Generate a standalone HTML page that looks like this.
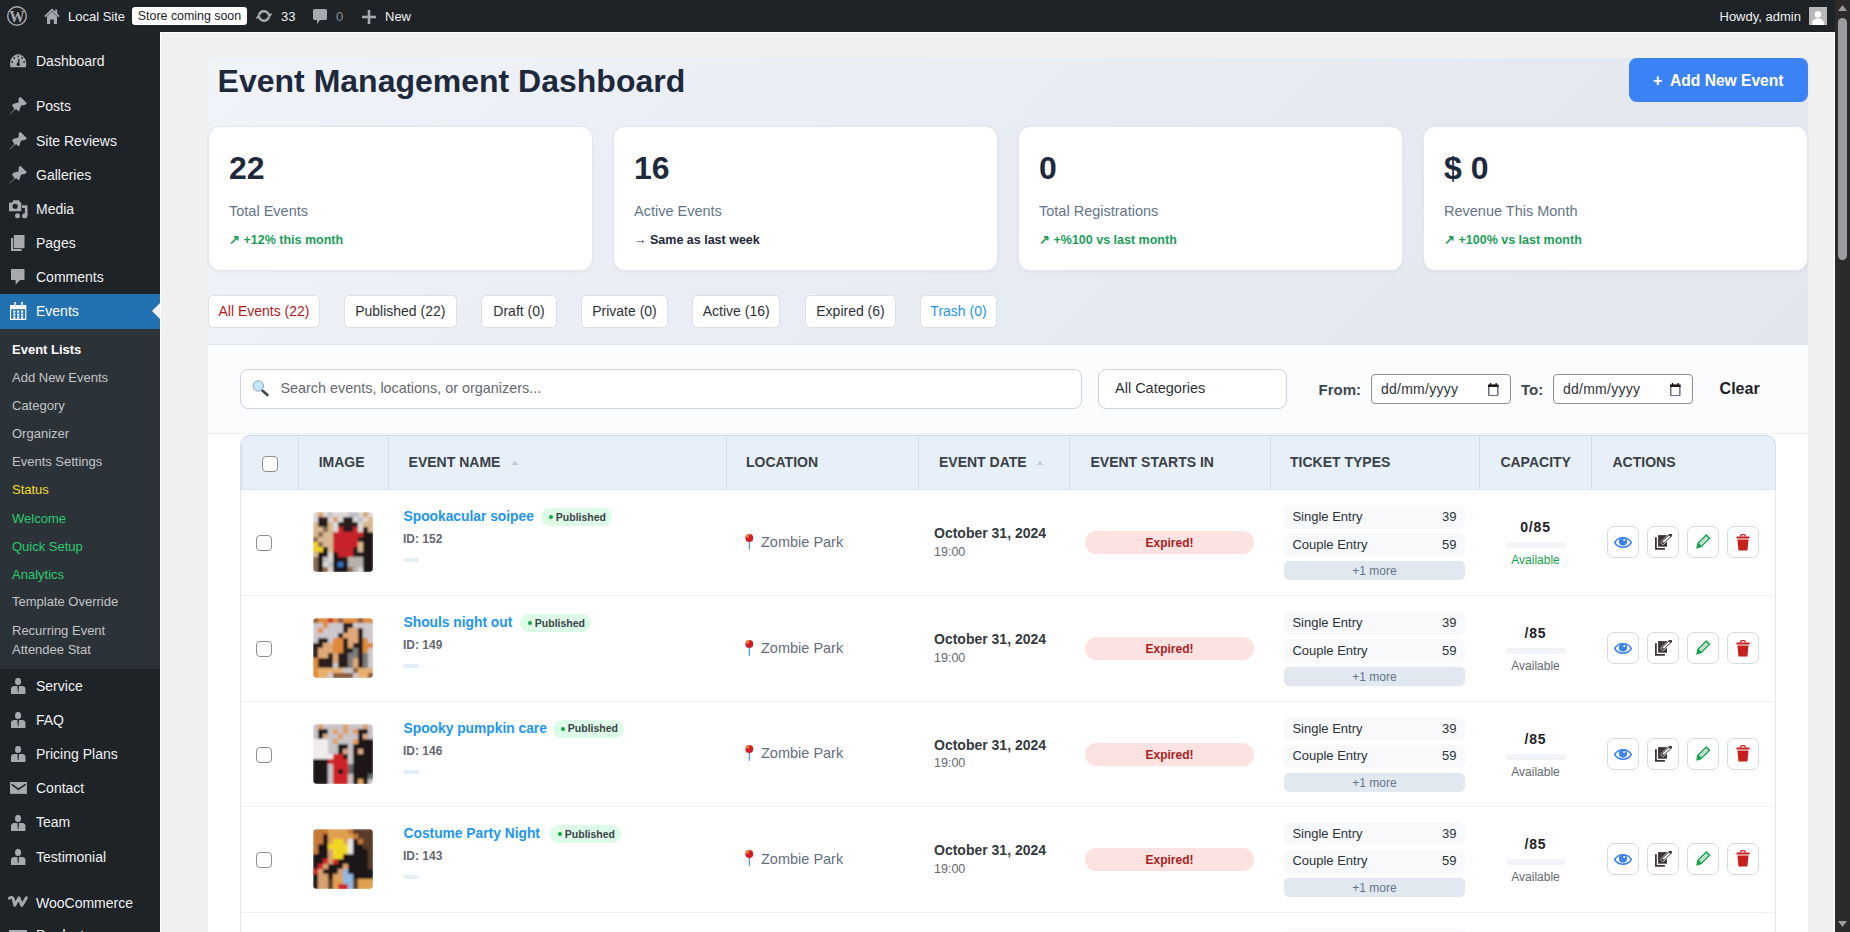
<!DOCTYPE html><html><head><meta charset="utf-8"><style>
*{box-sizing:border-box;margin:0;padding:0}
html,body{width:1850px;height:932px;overflow:hidden}
body{font-family:"Liberation Sans",sans-serif;background:#f0f0f1;position:relative}
.t{position:absolute;line-height:1;white-space:nowrap}
.r{position:absolute}
</style></head><body>
<div class="r" style="left:0.0px;top:0.0px;width:1835.0px;height:32.0px;background:#1d2327"></div>
<svg class="r" style="left:7.0px;top:6.0px" width="20" height="20" viewBox="0 0 20 20"><circle cx="10" cy="10" r="9.3" fill="none" stroke="#a7aaad" stroke-width="1.4"/><text x="10" y="15.6" text-anchor="middle" font-family="Liberation Serif" font-weight="700" font-size="17" fill="#a7aaad" textLength="15.5" lengthAdjust="spacingAndGlyphs">W</text></svg>
<svg class="r" style="left:44.0px;top:8.0px" width="16" height="17" viewBox="0 0 16 17"><path d="M1 8.6L8 1.8 15 8.6" fill="none" stroke="#a7aaad" stroke-width="2"/><path d="M3 8.6L8 3.8 13 8.6V16H9.8V11.5H6.2V16H3z" fill="#a7aaad"/><rect x="11.2" y="1.5" width="2" height="4.5" fill="#a7aaad"/></svg>
<div class="t" style="left:68.0px;top:9.50px;font-size:13.0px;font-weight:400;color:#f0f0f1;">Local Site</div>
<div class="r" style="left:132.0px;top:7.0px;width:115.0px;height:18.0px;background:#fff;border-radius:3px"></div>
<div class="t" style="left:132.0px;top:9.80px;width:115px;text-align:center;font-size:12.4px;font-weight:400;color:#1d2327;">Store coming soon</div>
<svg class="r" style="left:255.0px;top:9.0px" width="18" height="14" viewBox="0 0 18 14"><path d="M4 6.2A5.2 5.2 0 0 1 13.4 4.6M14 7.8A5.2 5.2 0 0 1 4.6 9.4" fill="none" stroke="#a7aaad" stroke-width="2.5"/><path d="M11.4 4.6H17.6L14.5 8.4zM6.6 9.4H0.4L3.5 5.6z" fill="#a7aaad"/></svg>
<div class="t" style="left:281.0px;top:9.50px;font-size:13.0px;font-weight:400;color:#f0f0f1;">33</div>
<svg class="r" style="left:313.0px;top:9.0px" width="14" height="16" viewBox="0 0 14 16"><path d="M1.5 0h11a1.5 1.5 0 0 1 1.5 1.5v8a1.5 1.5 0 0 1-1.5 1.5H7L4 15v-4H1.5A1.5 1.5 0 0 1 0 9.5v-8A1.5 1.5 0 0 1 1.5 0z" fill="#a7aaad"/></svg>
<div class="t" style="left:336.0px;top:9.50px;font-size:13.0px;font-weight:400;color:#8c8f94;">0</div>
<svg class="r" style="left:361.5px;top:9.5px" width="14" height="14" viewBox="0 0 14 14"><rect x="5.7" y="0" width="2.6" height="14" fill="#a7aaad"/><rect x="0" y="5.7" width="14" height="2.6" fill="#a7aaad"/></svg>
<div class="t" style="left:385.0px;top:9.50px;font-size:13.0px;font-weight:400;color:#f0f0f1;">New</div>
<div class="t" style="left:1719.5px;top:9.80px;font-size:13.0px;font-weight:400;color:#f0f0f1;">Howdy, admin</div>
<svg class="r" style="left:1809.0px;top:7.0px" width="18" height="18" viewBox="0 0 18 18"><rect width="18" height="18" fill="#b9b9bb"/><circle cx="9" cy="7.5" r="3.3" fill="#fff"/><path d="M3 18 C3 12.5 5.5 11.5 9 11.5 C12.5 11.5 15 12.5 15 18 Z" fill="#fff"/></svg>
<div class="r" style="left:1835.0px;top:0.0px;width:15.0px;height:932.0px;background:#2c2b2a"></div>
<svg class="r" style="left:1838.0px;top:5.0px" width="9" height="6" viewBox="0 0 9 6"><path d="M4.5 0 L9 6 L0 6 Z" fill="#9a9d9f"/></svg>
<div class="r" style="left:1838.0px;top:18.0px;width:9.0px;height:242.0px;background:#9a9d9f;border-radius:5px"></div>
<svg class="r" style="left:1838.0px;top:921.0px" width="9" height="6" viewBox="0 0 9 6"><path d="M0 0 L9 0 L4.5 6 Z" fill="#9a9d9f"/></svg>
<div class="r" style="left:160.0px;top:32.0px;width:1675.0px;height:1.0px;background:#fff"></div>
<div class="r" style="left:160.0px;top:32.0px;width:1.0px;height:900.0px;background:#fff"></div>
<div class="r" style="left:1834.0px;top:32.0px;width:1.0px;height:900.0px;background:#fff"></div>
<div class="r" style="left:0.0px;top:32.0px;width:160.0px;height:900.0px;background:#1d2327"></div>
<svg class="r" style="left:9.8px;top:53.8px" width="17" height="14" viewBox="0 0 17 14"><path d="M0.5 13.3C-0.3 10 0 7 1.5 4.5 3 2 5.5 0.2 8.15 0.2S13.3 2 14.8 4.5C16.3 7 16.6 10 15.8 13.3z" fill="#a7aaad"/><g fill="#1d2327"><circle cx="8.1" cy="2.3" r="0.9"/><circle cx="4.2" cy="4" r="0.9"/><circle cx="12.1" cy="4" r="0.9"/><circle cx="2.2" cy="8" r="0.9"/><circle cx="14.1" cy="8" r="0.9"/><path d="M8.4 4.8L9.5 5 9.3 10.5 7.3 10.5z"/><circle cx="8.2" cy="10.4" r="1.7"/></g></svg>
<div class="t" style="left:36.0px;top:54.35px;font-size:14.0px;font-weight:400;color:#f0f0f1;">Dashboard</div>
<svg class="r" style="left:8.9px;top:97.2px" width="18" height="18" viewBox="0 0 18 18"><path d="M0.2 17.5L5.5 12.3 3 8.2 4.6 6.8 9.5 5.5 9.75 0.9 11.55 0 17.9 6.3 15.9 8.1 12.3 8.4 11 11.2 10.5 13.5 9.5 14.3 7.4 12.2 5.6 13 0.7 17.6z" fill="#a7aaad"/></svg>
<div class="t" style="left:36.0px;top:99.15px;font-size:14.0px;font-weight:400;color:#f0f0f1;">Posts</div>
<svg class="r" style="left:8.9px;top:131.6px" width="18" height="18" viewBox="0 0 18 18"><path d="M0.2 17.5L5.5 12.3 3 8.2 4.6 6.8 9.5 5.5 9.75 0.9 11.55 0 17.9 6.3 15.9 8.1 12.3 8.4 11 11.2 10.5 13.5 9.5 14.3 7.4 12.2 5.6 13 0.7 17.6z" fill="#a7aaad"/></svg>
<div class="t" style="left:36.0px;top:133.55px;font-size:14.0px;font-weight:400;color:#f0f0f1;">Site Reviews</div>
<svg class="r" style="left:8.9px;top:166.1px" width="18" height="18" viewBox="0 0 18 18"><path d="M0.2 17.5L5.5 12.3 3 8.2 4.6 6.8 9.5 5.5 9.75 0.9 11.55 0 17.9 6.3 15.9 8.1 12.3 8.4 11 11.2 10.5 13.5 9.5 14.3 7.4 12.2 5.6 13 0.7 17.6z" fill="#a7aaad"/></svg>
<div class="t" style="left:36.0px;top:168.05px;font-size:14.0px;font-weight:400;color:#f0f0f1;">Galleries</div>
<svg class="r" style="left:8.9px;top:200.0px" width="19" height="18.5" viewBox="0 0 19 18"><path d="M0 2.2h3.4l1-2.2h5.7l1 2.2h1.2v8.7H0z" fill="#a7aaad"/><circle cx="6.1" cy="6" r="2.6" fill="#1d2327"/><path d="M13.1 5h5.4v10.5h-2.6V7.8h-2.8z" fill="#a7aaad"/><circle cx="8.5" cy="15.5" r="2.5" fill="#a7aaad"/><circle cx="15.7" cy="15.5" r="2.6" fill="#a7aaad"/></svg>
<div class="t" style="left:36.0px;top:202.15px;font-size:14.0px;font-weight:400;color:#f0f0f1;">Media</div>
<svg class="r" style="left:10.8px;top:234.8px" width="14" height="17" viewBox="0 0 14 17"><rect x="2.9" y="0" width="10.6" height="13.2" fill="#a7aaad"/><path d="M0 2.9h2.2v11h8.4v2.2H0z" fill="#a7aaad"/></svg>
<div class="t" style="left:36.0px;top:236.15px;font-size:14.0px;font-weight:400;color:#f0f0f1;">Pages</div>
<svg class="r" style="left:10.8px;top:269.0px" width="14" height="16" viewBox="0 0 14 16"><path d="M0 0h13.5v10.9H9.2L4.6 15.7V10.9H0z" fill="#a7aaad"/></svg>
<div class="t" style="left:36.0px;top:270.15px;font-size:14.0px;font-weight:400;color:#f0f0f1;">Comments</div>
<div class="r" style="left:0.0px;top:294.0px;width:160.0px;height:34.5px;background:#2271b1"></div>
<svg class="r" style="left:9.9px;top:302.0px" width="17" height="18" viewBox="0 0 17 18"><rect x="0" y="3" width="16.3" height="15" fill="#fff"/><rect x="1.2" y="7.2" width="13.9" height="9.6" fill="#2271b1"/><rect x="4.2" y="0" width="1.9" height="5" fill="#fff"/><rect x="11.1" y="0" width="1.9" height="5" fill="#fff"/><rect x="4.8" y="0.8" width="0.7" height="3.6" fill="#5b93c9"/><rect x="11.7" y="0.8" width="0.7" height="3.6" fill="#5b93c9"/><rect x="3.2" y="8.5" width="2.2" height="2.2" fill="#fff"/><rect x="3.2" y="11.5" width="2.2" height="2.2" fill="#fff"/><rect x="3.2" y="14.5" width="2.2" height="2.2" fill="#fff"/><rect x="7.1" y="8.5" width="2.2" height="2.2" fill="#fff"/><rect x="7.1" y="11.5" width="2.2" height="2.2" fill="#fff"/><rect x="7.1" y="14.5" width="2.2" height="2.2" fill="#fff"/><rect x="11.0" y="8.5" width="2.2" height="2.2" fill="#fff"/><rect x="11.0" y="11.5" width="2.2" height="2.2" fill="#fff"/><rect x="11.0" y="14.5" width="2.2" height="2.2" fill="#fff"/></svg>
<div class="t" style="left:36.0px;top:304.15px;font-size:14.0px;font-weight:400;color:#fff;">Events</div>
<svg class="r" style="left:152.0px;top:303.0px" width="8" height="16" viewBox="0 0 8 16"><path d="M8 0 L0 8 L8 16 Z" fill="#f0f0f1"/></svg>
<div class="r" style="left:0.0px;top:328.5px;width:160.0px;height:340.5px;background:#2c3338"></div>
<div class="t" style="left:12.0px;top:343.00px;font-size:13.0px;font-weight:700;color:#fff;">Event Lists</div>
<div class="t" style="left:12.0px;top:371.00px;font-size:13.0px;font-weight:400;color:#c3c4c7;">Add New Events</div>
<div class="t" style="left:12.0px;top:399.00px;font-size:13.0px;font-weight:400;color:#c3c4c7;">Category</div>
<div class="t" style="left:12.0px;top:427.00px;font-size:13.0px;font-weight:400;color:#c3c4c7;">Organizer</div>
<div class="t" style="left:12.0px;top:455.00px;font-size:13.0px;font-weight:400;color:#c3c4c7;">Events Settings</div>
<div class="t" style="left:12.0px;top:483.00px;font-size:13.0px;font-weight:400;color:#f5dc2a;">Status</div>
<div class="t" style="left:12.0px;top:511.50px;font-size:13.0px;font-weight:400;color:#2ecc71;">Welcome</div>
<div class="t" style="left:12.0px;top:539.50px;font-size:13.0px;font-weight:400;color:#2ecc71;">Quick Setup</div>
<div class="t" style="left:12.0px;top:567.50px;font-size:13.0px;font-weight:400;color:#2ecc71;">Analytics</div>
<div class="t" style="left:12.0px;top:595.20px;font-size:13.0px;font-weight:400;color:#c3c4c7;">Template Override</div>
<div class="t" style="left:12.0px;top:624.00px;font-size:13.0px;font-weight:400;color:#c3c4c7;">Recurring Event</div>
<div class="t" style="left:12.0px;top:643.00px;font-size:13.0px;font-weight:400;color:#c3c4c7;">Attendee Stat</div>
<svg class="r" style="left:10.9px;top:677.9px" width="15" height="16" viewBox="0 0 15 16"><ellipse cx="7.05" cy="3.4" rx="3.05" ry="3.5" fill="#a7aaad"/><path d="M0 15.9V10.8Q0 7.9 3.5 7.9H10.9Q14.4 7.9 14.4 10.8V15.9z" fill="#a7aaad"/><path d="M6.3 7.9H7.9L7.6 13.8 6.9 14.4z" fill="#1d2327"/></svg>
<div class="t" style="left:36.0px;top:679.15px;font-size:14.0px;font-weight:400;color:#f0f0f1;">Service</div>
<svg class="r" style="left:10.9px;top:711.9px" width="15" height="16" viewBox="0 0 15 16"><ellipse cx="7.05" cy="3.4" rx="3.05" ry="3.5" fill="#a7aaad"/><path d="M0 15.9V10.8Q0 7.9 3.5 7.9H10.9Q14.4 7.9 14.4 10.8V15.9z" fill="#a7aaad"/><path d="M6.3 7.9H7.9L7.6 13.8 6.9 14.4z" fill="#1d2327"/></svg>
<div class="t" style="left:36.0px;top:713.15px;font-size:14.0px;font-weight:400;color:#f0f0f1;">FAQ</div>
<svg class="r" style="left:10.9px;top:745.9px" width="15" height="16" viewBox="0 0 15 16"><ellipse cx="7.05" cy="3.4" rx="3.05" ry="3.5" fill="#a7aaad"/><path d="M0 15.9V10.8Q0 7.9 3.5 7.9H10.9Q14.4 7.9 14.4 10.8V15.9z" fill="#a7aaad"/><path d="M6.3 7.9H7.9L7.6 13.8 6.9 14.4z" fill="#1d2327"/></svg>
<div class="t" style="left:36.0px;top:747.15px;font-size:14.0px;font-weight:400;color:#f0f0f1;">Pricing Plans</div>
<svg class="r" style="left:10.0px;top:781.9px" width="17" height="12" viewBox="0 0 17 12"><rect width="16.9" height="11.9" fill="#a7aaad"/><path d="M1.7 2.3L8.4 7.2 15.6 2.3" fill="none" stroke="#1d2327" stroke-width="1.6"/></svg>
<div class="t" style="left:36.0px;top:781.15px;font-size:14.0px;font-weight:400;color:#f0f0f1;">Contact</div>
<svg class="r" style="left:10.9px;top:814.9px" width="15" height="16" viewBox="0 0 15 16"><ellipse cx="7.05" cy="3.4" rx="3.05" ry="3.5" fill="#a7aaad"/><path d="M0 15.9V10.8Q0 7.9 3.5 7.9H10.9Q14.4 7.9 14.4 10.8V15.9z" fill="#a7aaad"/><path d="M6.3 7.9H7.9L7.6 13.8 6.9 14.4z" fill="#1d2327"/></svg>
<div class="t" style="left:36.0px;top:815.15px;font-size:14.0px;font-weight:400;color:#f0f0f1;">Team</div>
<svg class="r" style="left:10.9px;top:848.9px" width="15" height="16" viewBox="0 0 15 16"><ellipse cx="7.05" cy="3.4" rx="3.05" ry="3.5" fill="#a7aaad"/><path d="M0 15.9V10.8Q0 7.9 3.5 7.9H10.9Q14.4 7.9 14.4 10.8V15.9z" fill="#a7aaad"/><path d="M6.3 7.9H7.9L7.6 13.8 6.9 14.4z" fill="#1d2327"/></svg>
<div class="t" style="left:36.0px;top:850.15px;font-size:14.0px;font-weight:400;color:#f0f0f1;">Testimonial</div>
<svg class="r" style="left:8.0px;top:895.9px" width="20" height="12" viewBox="0 0 20 12"><path d="M1.4 2.2Q3.5 0.4 5.2 2.6L6.8 9.4 11 1.8 13.8 9.4 18.4 1.8" fill="none" stroke="#a7aaad" stroke-width="2.9" stroke-linejoin="round" stroke-linecap="round"/></svg>
<div class="t" style="left:36.0px;top:895.65px;font-size:14.0px;font-weight:400;color:#f0f0f1;">WooCommerce</div>
<div class="r" style="left:9.0px;top:930.0px;width:18.0px;height:5.0px;background:#a7aaad"></div>
<div class="t" style="left:36.0px;top:928.35px;font-size:14.0px;font-weight:400;color:#f0f0f1;">Products</div>
<div class="r" style="left:208.0px;top:58.0px;width:1600.0px;height:286.0px;background:linear-gradient(135deg,#f0f3f8 0%,#e6ebf2 60%,#e2e7ef 100%)"></div>
<div class="t" style="left:217.6px;top:64.81px;font-size:32.0px;font-weight:700;color:#1e293b;">Event Management Dashboard</div>
<div class="r" style="left:1629.0px;top:58.0px;width:179.0px;height:44.0px;background:#3b82f6;border-radius:8px"></div>
<div class="t" style="left:1653.0px;top:72.86px;font-size:16.0px;font-weight:700;color:#fff;">+</div>
<div class="t" style="left:1670.0px;top:73.19px;font-size:15.6px;font-weight:700;color:#fff;">Add New Event</div>
<div class="r" style="left:208.0px;top:126.0px;width:385.0px;height:144.5px;background:#fff;border:1px solid #e3e8ef;border-radius:12px;box-shadow:0 1px 3px rgba(15,23,42,0.06)"></div>
<div class="t" style="left:229.0px;top:151.91px;font-size:32.0px;font-weight:700;color:#1e293b;">22</div>
<div class="t" style="left:229.0px;top:204.03px;font-size:14.5px;font-weight:400;color:#64748b;">Total Events</div>
<div class="t" style="left:229.0px;top:234.42px;font-size:12.5px;font-weight:700;color:#1c9e57;">&#8599; +12% this month</div>
<div class="r" style="left:613.0px;top:126.0px;width:385.0px;height:144.5px;background:#fff;border:1px solid #e3e8ef;border-radius:12px;box-shadow:0 1px 3px rgba(15,23,42,0.06)"></div>
<div class="t" style="left:634.0px;top:151.91px;font-size:32.0px;font-weight:700;color:#1e293b;">16</div>
<div class="t" style="left:634.0px;top:204.03px;font-size:14.5px;font-weight:400;color:#64748b;">Active Events</div>
<div class="t" style="left:634.0px;top:234.42px;font-size:12.5px;font-weight:700;color:#1e293b;">&#8594; Same as last week</div>
<div class="r" style="left:1018.0px;top:126.0px;width:385.0px;height:144.5px;background:#fff;border:1px solid #e3e8ef;border-radius:12px;box-shadow:0 1px 3px rgba(15,23,42,0.06)"></div>
<div class="t" style="left:1039.0px;top:151.91px;font-size:32.0px;font-weight:700;color:#1e293b;">0</div>
<div class="t" style="left:1039.0px;top:204.03px;font-size:14.5px;font-weight:400;color:#64748b;">Total Registrations</div>
<div class="t" style="left:1039.0px;top:234.42px;font-size:12.5px;font-weight:700;color:#1c9e57;">&#8599; +%100 vs last month</div>
<div class="r" style="left:1423.0px;top:126.0px;width:385.0px;height:144.5px;background:#fff;border:1px solid #e3e8ef;border-radius:12px;box-shadow:0 1px 3px rgba(15,23,42,0.06)"></div>
<div class="t" style="left:1444.0px;top:151.91px;font-size:32.0px;font-weight:700;color:#1e293b;">$ 0</div>
<div class="t" style="left:1444.0px;top:204.03px;font-size:14.5px;font-weight:400;color:#64748b;">Revenue This Month</div>
<div class="t" style="left:1444.0px;top:234.42px;font-size:12.5px;font-weight:700;color:#1c9e57;">&#8599; +100% vs last month</div>
<div class="r" style="left:208.0px;top:295.0px;width:112.0px;height:33.0px;background:#fff;border:1px solid #dcdfe4;border-radius:5px"></div>
<div class="t" style="left:198.0px;top:303.85px;width:132px;text-align:center;font-size:14.0px;font-weight:400;color:#b01c1c;">All Events (22)</div>
<div class="r" style="left:344.0px;top:295.0px;width:113.0px;height:33.0px;background:#fff;border:1px solid #dcdfe4;border-radius:5px"></div>
<div class="t" style="left:334.3px;top:303.85px;width:132px;text-align:center;font-size:14.0px;font-weight:400;color:#2c3338;">Published (22)</div>
<div class="r" style="left:481.0px;top:295.0px;width:76.0px;height:33.0px;background:#fff;border:1px solid #dcdfe4;border-radius:5px"></div>
<div class="t" style="left:471.0px;top:303.85px;width:96px;text-align:center;font-size:14.0px;font-weight:400;color:#2c3338;">Draft (0)</div>
<div class="r" style="left:581.0px;top:295.0px;width:87.0px;height:33.0px;background:#fff;border:1px solid #dcdfe4;border-radius:5px"></div>
<div class="t" style="left:571.0px;top:303.85px;width:107px;text-align:center;font-size:14.0px;font-weight:400;color:#2c3338;">Private (0)</div>
<div class="r" style="left:692.0px;top:295.0px;width:88.0px;height:33.0px;background:#fff;border:1px solid #dcdfe4;border-radius:5px"></div>
<div class="t" style="left:682.2px;top:303.85px;width:108px;text-align:center;font-size:14.0px;font-weight:400;color:#2c3338;">Active (16)</div>
<div class="r" style="left:805.0px;top:295.0px;width:91.0px;height:33.0px;background:#fff;border:1px solid #dcdfe4;border-radius:5px"></div>
<div class="t" style="left:795.0px;top:303.85px;width:111px;text-align:center;font-size:14.0px;font-weight:400;color:#2c3338;">Expired (6)</div>
<div class="r" style="left:920.0px;top:295.0px;width:77.0px;height:33.0px;background:#fff;border:1px solid #dcdfe4;border-radius:5px"></div>
<div class="t" style="left:910.0px;top:303.85px;width:97px;text-align:center;font-size:14.0px;font-weight:400;color:#2196f3;">Trash (0)</div>
<div class="r" style="left:208.0px;top:344.0px;width:1600.0px;height:588.0px;background:#fff"></div>
<div class="r" style="left:208.0px;top:344.0px;width:1600.0px;height:90.0px;background:#fbfcfd;border-bottom:1px solid #edf1f5"></div>
<div class="r" style="left:208.0px;top:344.0px;width:1600.0px;height:1.0px;background:#e1e7ef"></div>
<div class="r" style="left:240.0px;top:369.0px;width:842.0px;height:40.0px;background:#fff;border:1px solid #ccd3dc;border-radius:8px"></div>
<svg class="r" style="left:252.0px;top:379.5px" width="17" height="17" viewBox="0 0 17 17"><circle cx="6.3" cy="6" r="5.2" fill="#c2e9fb" stroke="#8c99a6" stroke-width="0.9"/><path d="M10.6 10.8L15.4 15" stroke="#34493d" stroke-width="2.6" stroke-linecap="round"/></svg>
<div class="t" style="left:280.4px;top:381.31px;font-size:14.4px;font-weight:400;color:#646970;">Search events, locations, or organizers...</div>
<div class="r" style="left:1098.0px;top:369.0px;width:189.0px;height:40.0px;background:#fff;border:1px solid #ccd3dc;border-radius:8px"></div>
<div class="t" style="left:1115.0px;top:381.23px;font-size:14.5px;font-weight:400;color:#2c3338;">All Categories</div>
<div class="t" style="left:1318.6px;top:382.10px;font-size:15.0px;font-weight:700;color:#3d4950;">From:</div>
<div class="t" style="left:1521.0px;top:382.10px;font-size:15.0px;font-weight:700;color:#3d4950;">To:</div>
<div class="r" style="left:1371.0px;top:374.0px;width:140.0px;height:30.0px;background:#fff;border:1px solid #8c8f94;border-radius:4px"></div>
<div class="t" style="left:1381.0px;top:382.15px;font-size:14.0px;font-weight:400;color:#2c3338;letter-spacing:0.25px">dd/mm/yyyy</div>
<svg class="r" style="left:1488.3px;top:383.0px" width="11" height="13" viewBox="0 0 11 13"><rect x="0.75" y="2.3" width="9.1" height="10.4" rx="1" fill="none" stroke="#6b6e82" stroke-width="1.5"/><rect x="0" y="1.6" width="10.6" height="2.3" fill="#140c0c"/><rect x="1.8" y="0" width="1.3" height="2.5" fill="#140c0c"/><rect x="7.5" y="0" width="1.3" height="2.5" fill="#140c0c"/></svg>
<div class="r" style="left:1553.0px;top:374.0px;width:140.0px;height:30.0px;background:#fff;border:1px solid #8c8f94;border-radius:4px"></div>
<div class="t" style="left:1563.0px;top:382.15px;font-size:14.0px;font-weight:400;color:#2c3338;letter-spacing:0.25px">dd/mm/yyyy</div>
<svg class="r" style="left:1670.3px;top:383.0px" width="11" height="13" viewBox="0 0 11 13"><rect x="0.75" y="2.3" width="9.1" height="10.4" rx="1" fill="none" stroke="#6b6e82" stroke-width="1.5"/><rect x="0" y="1.6" width="10.6" height="2.3" fill="#140c0c"/><rect x="1.8" y="0" width="1.3" height="2.5" fill="#140c0c"/><rect x="7.5" y="0" width="1.3" height="2.5" fill="#140c0c"/></svg>
<div class="t" style="left:1719.6px;top:381.46px;font-size:16.0px;font-weight:700;color:#1d2327;">Clear</div>
<div class="r" style="left:240.0px;top:434.5px;width:1536.0px;height:517.5px;background:#fff;border:1px solid #e1e7ee;border-radius:10px 10px 0 0"></div>
<div class="r" style="left:240.0px;top:434.5px;width:1536.0px;height:55.0px;background:#e7f0f8;border:1px solid #d5dde6;border-left-color:#e0e5ee;border-bottom:1px solid #dbe4ec;border-radius:10px 10px 0 0"></div>
<div class="r" style="left:241.0px;top:443.5px;width:1.0px;height:45.0px;background:#d6d9de"></div>
<div class="r" style="left:298.0px;top:435.5px;width:1.0px;height:54.0px;background:#d3dde7"></div>
<div class="r" style="left:388.0px;top:435.5px;width:1.0px;height:54.0px;background:#d3dde7"></div>
<div class="r" style="left:725.5px;top:435.5px;width:1.0px;height:54.0px;background:#d3dde7"></div>
<div class="r" style="left:918.0px;top:435.5px;width:1.0px;height:54.0px;background:#d3dde7"></div>
<div class="r" style="left:1069.0px;top:435.5px;width:1.0px;height:54.0px;background:#d3dde7"></div>
<div class="r" style="left:1269.6px;top:435.5px;width:1.0px;height:54.0px;background:#d3dde7"></div>
<div class="r" style="left:1479.0px;top:435.5px;width:1.0px;height:54.0px;background:#d3dde7"></div>
<div class="r" style="left:1591.0px;top:435.5px;width:1.0px;height:54.0px;background:#d3dde7"></div>
<div class="t" style="left:318.7px;top:455.45px;font-size:14.0px;font-weight:700;color:#3a4046;">IMAGE</div>
<div class="t" style="left:408.6px;top:455.45px;font-size:14.0px;font-weight:700;color:#3a4046;">EVENT NAME</div>
<div class="t" style="left:746.0px;top:455.45px;font-size:14.0px;font-weight:700;color:#3a4046;">LOCATION</div>
<div class="t" style="left:939.0px;top:455.45px;font-size:14.0px;font-weight:700;color:#3a4046;">EVENT DATE</div>
<div class="t" style="left:1090.5px;top:455.45px;font-size:14.0px;font-weight:700;color:#3a4046;">EVENT STARTS IN</div>
<div class="t" style="left:1290.0px;top:455.45px;font-size:14.0px;font-weight:700;color:#3a4046;">TICKET TYPES</div>
<div class="t" style="left:1500.4px;top:455.45px;font-size:14.0px;font-weight:700;color:#3a4046;">CAPACITY</div>
<div class="t" style="left:1612.5px;top:455.45px;font-size:14.0px;font-weight:700;color:#3a4046;">ACTIONS</div>
<svg class="r" style="left:511.0px;top:460.0px" width="8" height="6" viewBox="0 0 8 6"><path d="M4 1 L7.5 5 L0.5 5 Z" fill="#c4c9cf"/></svg>
<svg class="r" style="left:1036.0px;top:460.0px" width="8" height="6" viewBox="0 0 8 6"><path d="M4 1 L7.5 5 L0.5 5 Z" fill="#c4c9cf"/></svg>
<div class="r" style="left:262.0px;top:456.0px;width:16.0px;height:16.0px;background:#fff;border:1px solid #8c8f94;border-radius:4px"></div>
<div class="r" style="left:241.0px;top:595.0px;width:1533.0px;height:1.0px;background:#eef2f6"></div>
<div class="r" style="left:256.0px;top:535.0px;width:16.0px;height:16.0px;background:#fff;border:1px solid #8c8f94;border-radius:4px"></div>
<svg class="r" style="left:313px;top:512.0px;border-radius:4px" width="60" height="60" viewBox="0 0 60 60"><filter id="bl0" x="0" y="0" width="1" height="1"><feGaussianBlur stdDeviation="1.3"/></filter><g filter="url(#bl0)"><rect x="0" y="0" width="5.5" height="5.5" fill="#ddd8d4"/><rect x="5" y="0" width="5.5" height="5.5" fill="#d9a070"/><rect x="10" y="0" width="5.5" height="5.5" fill="#ddd8d4"/><rect x="15" y="0" width="5.5" height="5.5" fill="#c0c0c8"/><rect x="20" y="0" width="5.5" height="5.5" fill="#ddd8d4"/><rect x="25" y="0" width="5.5" height="5.5" fill="#ddd8d4"/><rect x="30" y="0" width="5.5" height="5.5" fill="#ddd8d4"/><rect x="35" y="0" width="5.5" height="5.5" fill="#c0c0c8"/><rect x="40" y="0" width="5.5" height="5.5" fill="#c0c0c8"/><rect x="45" y="0" width="5.5" height="5.5" fill="#ddd8d4"/><rect x="50" y="0" width="5.5" height="5.5" fill="#d9a070"/><rect x="55" y="0" width="5.5" height="5.5" fill="#ddd8d4"/><rect x="0" y="5" width="5.5" height="5.5" fill="#ddd8d4"/><rect x="5" y="5" width="5.5" height="5.5" fill="#2a1c1c"/><rect x="10" y="5" width="5.5" height="5.5" fill="#2a1c1c"/><rect x="15" y="5" width="5.5" height="5.5" fill="#ddd8d4"/><rect x="20" y="5" width="5.5" height="5.5" fill="#d9a070"/><rect x="25" y="5" width="5.5" height="5.5" fill="#ddd8d4"/><rect x="30" y="5" width="5.5" height="5.5" fill="#2a1c1c"/><rect x="35" y="5" width="5.5" height="5.5" fill="#2a1c1c"/><rect x="40" y="5" width="5.5" height="5.5" fill="#ddd8d4"/><rect x="45" y="5" width="5.5" height="5.5" fill="#c0c0c8"/><rect x="50" y="5" width="5.5" height="5.5" fill="#ddd8d4"/><rect x="55" y="5" width="5.5" height="5.5" fill="#d8b890"/><rect x="0" y="10" width="5.5" height="5.5" fill="#d8b890"/><rect x="5" y="10" width="5.5" height="5.5" fill="#2a1c1c"/><rect x="10" y="10" width="5.5" height="5.5" fill="#2a1c1c"/><rect x="15" y="10" width="5.5" height="5.5" fill="#d8b890"/><rect x="20" y="10" width="5.5" height="5.5" fill="#ddd8d4"/><rect x="25" y="10" width="5.5" height="5.5" fill="#2a1c1c"/><rect x="30" y="10" width="5.5" height="5.5" fill="#2a1c1c"/><rect x="35" y="10" width="5.5" height="5.5" fill="#2a1c1c"/><rect x="40" y="10" width="5.5" height="5.5" fill="#2a1c1c"/><rect x="45" y="10" width="5.5" height="5.5" fill="#ddd8d4"/><rect x="50" y="10" width="5.5" height="5.5" fill="#d8b890"/><rect x="55" y="10" width="5.5" height="5.5" fill="#d8b890"/><rect x="0" y="15" width="5.5" height="5.5" fill="#d8b890"/><rect x="5" y="15" width="5.5" height="5.5" fill="#d8b890"/><rect x="10" y="15" width="5.5" height="5.5" fill="#8a6a50"/><rect x="15" y="15" width="5.5" height="5.5" fill="#d8b890"/><rect x="20" y="15" width="5.5" height="5.5" fill="#ddd8d4"/><rect x="25" y="15" width="5.5" height="5.5" fill="#c8202a"/><rect x="30" y="15" width="5.5" height="5.5" fill="#2a1c1c"/><rect x="35" y="15" width="5.5" height="5.5" fill="#2a1c1c"/><rect x="40" y="15" width="5.5" height="5.5" fill="#c8202a"/><rect x="45" y="15" width="5.5" height="5.5" fill="#ddd8d4"/><rect x="50" y="15" width="5.5" height="5.5" fill="#1c1618"/><rect x="55" y="15" width="5.5" height="5.5" fill="#d8b890"/><rect x="0" y="20" width="5.5" height="5.5" fill="#d8b890"/><rect x="5" y="20" width="5.5" height="5.5" fill="#8a6a50"/><rect x="10" y="20" width="5.5" height="5.5" fill="#d8b890"/><rect x="15" y="20" width="5.5" height="5.5" fill="#d8b890"/><rect x="20" y="20" width="5.5" height="5.5" fill="#c8202a"/><rect x="25" y="20" width="5.5" height="5.5" fill="#c8202a"/><rect x="30" y="20" width="5.5" height="5.5" fill="#c8202a"/><rect x="35" y="20" width="5.5" height="5.5" fill="#c8202a"/><rect x="40" y="20" width="5.5" height="5.5" fill="#c8202a"/><rect x="45" y="20" width="5.5" height="5.5" fill="#c8202a"/><rect x="50" y="20" width="5.5" height="5.5" fill="#1c1618"/><rect x="55" y="20" width="5.5" height="5.5" fill="#1c1618"/><rect x="0" y="25" width="5.5" height="5.5" fill="#8a6a50"/><rect x="5" y="25" width="5.5" height="5.5" fill="#d8b890"/><rect x="10" y="25" width="5.5" height="5.5" fill="#d8b890"/><rect x="15" y="25" width="5.5" height="5.5" fill="#d8b890"/><rect x="20" y="25" width="5.5" height="5.5" fill="#c8202a"/><rect x="25" y="25" width="5.5" height="5.5" fill="#c8202a"/><rect x="30" y="25" width="5.5" height="5.5" fill="#c8202a"/><rect x="35" y="25" width="5.5" height="5.5" fill="#c8202a"/><rect x="40" y="25" width="5.5" height="5.5" fill="#c8202a"/><rect x="45" y="25" width="5.5" height="5.5" fill="#2a1c1c"/><rect x="50" y="25" width="5.5" height="5.5" fill="#1c1618"/><rect x="55" y="25" width="5.5" height="5.5" fill="#1c1618"/><rect x="0" y="30" width="5.5" height="5.5" fill="#f0d020"/><rect x="5" y="30" width="5.5" height="5.5" fill="#8a6a50"/><rect x="10" y="30" width="5.5" height="5.5" fill="#d8b890"/><rect x="15" y="30" width="5.5" height="5.5" fill="#d8b890"/><rect x="20" y="30" width="5.5" height="5.5" fill="#c8202a"/><rect x="25" y="30" width="5.5" height="5.5" fill="#c8202a"/><rect x="30" y="30" width="5.5" height="5.5" fill="#c8202a"/><rect x="35" y="30" width="5.5" height="5.5" fill="#c8202a"/><rect x="40" y="30" width="5.5" height="5.5" fill="#c8202a"/><rect x="45" y="30" width="5.5" height="5.5" fill="#d8b890"/><rect x="50" y="30" width="5.5" height="5.5" fill="#1c1618"/><rect x="55" y="30" width="5.5" height="5.5" fill="#1c1618"/><rect x="0" y="35" width="5.5" height="5.5" fill="#f0d020"/><rect x="5" y="35" width="5.5" height="5.5" fill="#f0d020"/><rect x="10" y="35" width="5.5" height="5.5" fill="#1c1618"/><rect x="15" y="35" width="5.5" height="5.5" fill="#d8b890"/><rect x="20" y="35" width="5.5" height="5.5" fill="#c8202a"/><rect x="25" y="35" width="5.5" height="5.5" fill="#c8202a"/><rect x="30" y="35" width="5.5" height="5.5" fill="#c8202a"/><rect x="35" y="35" width="5.5" height="5.5" fill="#c8202a"/><rect x="40" y="35" width="5.5" height="5.5" fill="#2a1c1c"/><rect x="45" y="35" width="5.5" height="5.5" fill="#d8b890"/><rect x="50" y="35" width="5.5" height="5.5" fill="#1c1618"/><rect x="55" y="35" width="5.5" height="5.5" fill="#1c1618"/><rect x="0" y="40" width="5.5" height="5.5" fill="#d8b890"/><rect x="5" y="40" width="5.5" height="5.5" fill="#1c1618"/><rect x="10" y="40" width="5.5" height="5.5" fill="#1c1618"/><rect x="15" y="40" width="5.5" height="5.5" fill="#ddd8d4"/><rect x="20" y="40" width="5.5" height="5.5" fill="#1c1618"/><rect x="25" y="40" width="5.5" height="5.5" fill="#c8202a"/><rect x="30" y="40" width="5.5" height="5.5" fill="#c8202a"/><rect x="35" y="40" width="5.5" height="5.5" fill="#c8202a"/><rect x="40" y="40" width="5.5" height="5.5" fill="#2a1c1c"/><rect x="45" y="40" width="5.5" height="5.5" fill="#1c1618"/><rect x="50" y="40" width="5.5" height="5.5" fill="#1c1618"/><rect x="55" y="40" width="5.5" height="5.5" fill="#1c1618"/><rect x="0" y="45" width="5.5" height="5.5" fill="#8a6a50"/><rect x="5" y="45" width="5.5" height="5.5" fill="#1c1618"/><rect x="10" y="45" width="5.5" height="5.5" fill="#c0c0c8"/><rect x="15" y="45" width="5.5" height="5.5" fill="#ddd8d4"/><rect x="20" y="45" width="5.5" height="5.5" fill="#1c1618"/><rect x="25" y="45" width="5.5" height="5.5" fill="#1c1618"/><rect x="30" y="45" width="5.5" height="5.5" fill="#2a1c1c"/><rect x="35" y="45" width="5.5" height="5.5" fill="#b8b0aa"/><rect x="40" y="45" width="5.5" height="5.5" fill="#b8b0aa"/><rect x="45" y="45" width="5.5" height="5.5" fill="#b8b0aa"/><rect x="50" y="45" width="5.5" height="5.5" fill="#1c1618"/><rect x="55" y="45" width="5.5" height="5.5" fill="#1c1618"/><rect x="0" y="50" width="5.5" height="5.5" fill="#8a6a50"/><rect x="5" y="50" width="5.5" height="5.5" fill="#1c1618"/><rect x="10" y="50" width="5.5" height="5.5" fill="#ddd8d4"/><rect x="15" y="50" width="5.5" height="5.5" fill="#c0c0c8"/><rect x="20" y="50" width="5.5" height="5.5" fill="#1c1618"/><rect x="25" y="50" width="5.5" height="5.5" fill="#3070c0"/><rect x="30" y="50" width="5.5" height="5.5" fill="#1c1618"/><rect x="35" y="50" width="5.5" height="5.5" fill="#b8b0aa"/><rect x="40" y="50" width="5.5" height="5.5" fill="#b8b0aa"/><rect x="45" y="50" width="5.5" height="5.5" fill="#b8b0aa"/><rect x="50" y="50" width="5.5" height="5.5" fill="#1c1618"/><rect x="55" y="50" width="5.5" height="5.5" fill="#1c1618"/><rect x="0" y="55" width="5.5" height="5.5" fill="#8a6a50"/><rect x="5" y="55" width="5.5" height="5.5" fill="#1c1618"/><rect x="10" y="55" width="5.5" height="5.5" fill="#8a6a50"/><rect x="15" y="55" width="5.5" height="5.5" fill="#ddd8d4"/><rect x="20" y="55" width="5.5" height="5.5" fill="#1c1618"/><rect x="25" y="55" width="5.5" height="5.5" fill="#1c1618"/><rect x="30" y="55" width="5.5" height="5.5" fill="#1c1618"/><rect x="35" y="55" width="5.5" height="5.5" fill="#8a6a50"/><rect x="40" y="55" width="5.5" height="5.5" fill="#b8b0aa"/><rect x="45" y="55" width="5.5" height="5.5" fill="#ddd8d4"/><rect x="50" y="55" width="5.5" height="5.5" fill="#1c1618"/><rect x="55" y="55" width="5.5" height="5.5" fill="#1c1618"/></g></svg>
<div class="t" style="left:403.5px;top:510.16px;font-size:13.8px;font-weight:700;color:#2196f3;">Spookacular soipee</div>
<div class="r" style="left:541.0px;top:508.0px;width:71.0px;height:18.0px;background:#dcfce7;border-radius:9px"></div>
<div class="r" style="left:548.5px;top:515.0px;width:4.0px;height:4.0px;background:#16a34a;border-radius:2px"></div>
<div class="t" style="left:555.8px;top:511.61px;font-size:10.5px;font-weight:700;color:#3c434a;">Published</div>
<div class="t" style="left:403.0px;top:532.84px;font-size:12.0px;font-weight:700;color:#646970;">ID: 152</div>
<div class="r" style="left:403.0px;top:558.0px;width:16.0px;height:4.0px;background:#e3eef7;border-radius:2px"></div>
<svg class="r" style="left:745.0px;top:533.5px" width="9" height="17" viewBox="0 0 9 17"><rect x="3.7" y="7" width="1.3" height="8.8" fill="#5b9bd5"/><circle cx="4.3" cy="4" r="3.9" fill="#d41a22"/><path d="M0.6 3.3A3.9 3.9 0 0 1 4.8 0.1L3.6 3.8z" fill="#e8823a"/></svg>
<div class="t" style="left:761.0px;top:534.73px;font-size:14.5px;font-weight:400;color:#646e7e;">Zombie Park</div>
<div class="t" style="left:934.0px;top:525.95px;font-size:14.0px;font-weight:700;color:#343a40;">October 31, 2024</div>
<div class="t" style="left:934.0px;top:545.62px;font-size:12.5px;font-weight:400;color:#646970;">19:00</div>
<div class="r" style="left:1085.0px;top:531.0px;width:169.0px;height:23.0px;background:#fde2e2;border-radius:12px"></div>
<div class="t" style="left:1085.0px;top:536.84px;width:169px;text-align:center;font-size:12.0px;font-weight:700;color:#a81e1e;">Expired!</div>
<div class="r" style="left:1284.0px;top:505.0px;width:181.0px;height:23.6px;background:#f7f9fb;border-radius:6px"></div>
<div class="t" style="left:1292.4px;top:509.80px;font-size:13.0px;font-weight:400;color:#2c3338;">Single Entry</div>
<div class="t" style="left:1396.5px;top:509.80px;width:60px;text-align:right;font-size:13.0px;font-weight:400;color:#2c3338;">39</div>
<div class="r" style="left:1284.0px;top:533.0px;width:181.0px;height:23.6px;background:#f7f9fb;border-radius:6px"></div>
<div class="t" style="left:1292.4px;top:537.50px;font-size:13.0px;font-weight:400;color:#2c3338;">Couple Entry</div>
<div class="t" style="left:1396.5px;top:537.50px;width:60px;text-align:right;font-size:13.0px;font-weight:400;color:#2c3338;">59</div>
<div class="r" style="left:1284.0px;top:561.0px;width:181.0px;height:19.0px;background:#e2e8f0;border-radius:5px"></div>
<div class="t" style="left:1284.0px;top:564.94px;width:181px;text-align:center;font-size:12.0px;font-weight:400;color:#64748b;">+1 more</div>
<div class="t" style="left:1485.5px;top:520.35px;width:100px;text-align:center;font-size:14.0px;font-weight:700;color:#1d2327;letter-spacing:0.8px">0/85</div>
<div class="r" style="left:1506.0px;top:542.0px;width:60.0px;height:6.0px;background:#f1f5f9;border-radius:3px"></div>
<div class="t" style="left:1485.5px;top:554.04px;width:100px;text-align:center;font-size:12.0px;font-weight:400;color:#16a34a;">Available</div>
<div class="r" style="left:1607.0px;top:526.0px;width:32.0px;height:32.0px;background:#fff;border:1px solid #d5dbe3;border-radius:7px"></div>
<div class="r" style="left:1647.0px;top:526.0px;width:32.0px;height:32.0px;background:#fff;border:1px solid #d5dbe3;border-radius:7px"></div>
<div class="r" style="left:1687.0px;top:526.0px;width:32.0px;height:32.0px;background:#fff;border:1px solid #d5dbe3;border-radius:7px"></div>
<div class="r" style="left:1727.0px;top:526.0px;width:32.0px;height:32.0px;background:#fff;border:1px solid #d5dbe3;border-radius:7px"></div>
<svg class="r" style="left:1614.0px;top:537.0px" width="18" height="11" viewBox="0 0 18 11"><path d="M9 0.75C4.8 0.75 1.8 3.6 0.7 5.5 1.8 7.4 4.8 10.25 9 10.25S16.2 7.4 17.3 5.5C16.2 3.6 13.2 0.75 9 0.75z" fill="none" stroke="#3b82f6" stroke-width="1.5"/><circle cx="9" cy="4.6" r="4.1" fill="#3b82f6"/><circle cx="10.2" cy="3" r="1.05" fill="#fff"/></svg>
<svg class="r" style="left:1655.0px;top:534.0px" width="18" height="17" viewBox="0 0 18 17"><path d="M0 3.2h1.8v10.9h8.1v1.6H0z" fill="#3d3535"/><rect x="3.1" y="1.1" width="8.9" height="11.6" fill="#3d3535"/><line x1="7.9" y1="8.3" x2="15.4" y2="1.3" stroke="#fff" stroke-width="4.4" stroke-linecap="round"/><line x1="7.9" y1="8.3" x2="15.4" y2="1.3" stroke="#3d3535" stroke-width="3.4" stroke-linecap="round"/><line x1="8.1" y1="8.1" x2="14.6" y2="2.1" stroke="#fff" stroke-width="1.8"/></svg>
<svg class="r" style="left:1695.8px;top:534.3px" width="15" height="15" viewBox="0 0 15 15"><path d="M10.35 0.05L14.45 4.15 5.38 13.22 0.2 14.8 1.28 9.12z" fill="#16a34a"/><path d="M5.24 11.38L12.33 4.29 10.21 2.17 3.12 9.26z" fill="#fff"/><path d="M4.18 10.32L11.27 3.23" stroke="#16a34a" stroke-width="0.7"/></svg>
<svg class="r" style="left:1735.5px;top:533.5px" width="14" height="17" viewBox="0 0 14 17"><path d="M4.5 2.6Q4.5 0.5 7 0.5Q9.5 0.5 9.5 2.6" fill="none" stroke="#c81e1e" stroke-width="1.2"/><rect x="0.4" y="2.5" width="13.2" height="1.9" rx="0.6" fill="#c81e1e"/><path d="M1.4 5.6H12.5L11.4 16.5H2.5z" fill="#c81e1e"/></svg>
<div class="r" style="left:241.0px;top:700.7px;width:1533.0px;height:1.0px;background:#eef2f6"></div>
<div class="r" style="left:256.0px;top:641.0px;width:16.0px;height:16.0px;background:#fff;border:1px solid #8c8f94;border-radius:4px"></div>
<svg class="r" style="left:313px;top:618.0px;border-radius:4px" width="60" height="60" viewBox="0 0 60 60"><filter id="bl1" x="0" y="0" width="1" height="1"><feGaussianBlur stdDeviation="1.3"/></filter><g filter="url(#bl1)"><rect x="0" y="0" width="5.5" height="5.5" fill="#8a5a3a"/><rect x="5" y="0" width="5.5" height="5.5" fill="#e08a3a"/><rect x="10" y="0" width="5.5" height="5.5" fill="#e08a3a"/><rect x="15" y="0" width="5.5" height="5.5" fill="#c83020"/><rect x="20" y="0" width="5.5" height="5.5" fill="#e08a3a"/><rect x="25" y="0" width="5.5" height="5.5" fill="#8a5a3a"/><rect x="30" y="0" width="5.5" height="5.5" fill="#e08a3a"/><rect x="35" y="0" width="5.5" height="5.5" fill="#e08a3a"/><rect x="40" y="0" width="5.5" height="5.5" fill="#e08a3a"/><rect x="45" y="0" width="5.5" height="5.5" fill="#8a5a3a"/><rect x="50" y="0" width="5.5" height="5.5" fill="#e08a3a"/><rect x="55" y="0" width="5.5" height="5.5" fill="#e08a3a"/><rect x="0" y="5" width="5.5" height="5.5" fill="#cdc8cc"/><rect x="5" y="5" width="5.5" height="5.5" fill="#cdc8cc"/><rect x="10" y="5" width="5.5" height="5.5" fill="#e08a3a"/><rect x="15" y="5" width="5.5" height="5.5" fill="#cdc8cc"/><rect x="20" y="5" width="5.5" height="5.5" fill="#cdc8cc"/><rect x="25" y="5" width="5.5" height="5.5" fill="#cdc8cc"/><rect x="30" y="5" width="5.5" height="5.5" fill="#2a1a1a"/><rect x="35" y="5" width="5.5" height="5.5" fill="#2a1a1a"/><rect x="40" y="5" width="5.5" height="5.5" fill="#cdc8cc"/><rect x="45" y="5" width="5.5" height="5.5" fill="#cdc8cc"/><rect x="50" y="5" width="5.5" height="5.5" fill="#cdc8cc"/><rect x="55" y="5" width="5.5" height="5.5" fill="#cdc8cc"/><rect x="0" y="10" width="5.5" height="5.5" fill="#cdc8cc"/><rect x="5" y="10" width="5.5" height="5.5" fill="#e08a3a"/><rect x="10" y="10" width="5.5" height="5.5" fill="#cdc8cc"/><rect x="15" y="10" width="5.5" height="5.5" fill="#cdc8cc"/><rect x="20" y="10" width="5.5" height="5.5" fill="#cdc8cc"/><rect x="25" y="10" width="5.5" height="5.5" fill="#cdc8cc"/><rect x="30" y="10" width="5.5" height="5.5" fill="#2a1a1a"/><rect x="35" y="10" width="5.5" height="5.5" fill="#e0a878"/><rect x="40" y="10" width="5.5" height="5.5" fill="#e0a878"/><rect x="45" y="10" width="5.5" height="5.5" fill="#2a1a1a"/><rect x="50" y="10" width="5.5" height="5.5" fill="#cdc8cc"/><rect x="55" y="10" width="5.5" height="5.5" fill="#cdc8cc"/><rect x="0" y="15" width="5.5" height="5.5" fill="#cdc8cc"/><rect x="5" y="15" width="5.5" height="5.5" fill="#cdc8cc"/><rect x="10" y="15" width="5.5" height="5.5" fill="#cdc8cc"/><rect x="15" y="15" width="5.5" height="5.5" fill="#cdc8cc"/><rect x="20" y="15" width="5.5" height="5.5" fill="#cdc8cc"/><rect x="25" y="15" width="5.5" height="5.5" fill="#2a1a1a"/><rect x="30" y="15" width="5.5" height="5.5" fill="#e0a878"/><rect x="35" y="15" width="5.5" height="5.5" fill="#e0a878"/><rect x="40" y="15" width="5.5" height="5.5" fill="#e0a878"/><rect x="45" y="15" width="5.5" height="5.5" fill="#2a1a1a"/><rect x="50" y="15" width="5.5" height="5.5" fill="#cdc8cc"/><rect x="55" y="15" width="5.5" height="5.5" fill="#cdc8cc"/><rect x="0" y="20" width="5.5" height="5.5" fill="#cdc8cc"/><rect x="5" y="20" width="5.5" height="5.5" fill="#2a1a1a"/><rect x="10" y="20" width="5.5" height="5.5" fill="#2a1a1a"/><rect x="15" y="20" width="5.5" height="5.5" fill="#cdc8cc"/><rect x="20" y="20" width="5.5" height="5.5" fill="#e08a3a"/><rect x="25" y="20" width="5.5" height="5.5" fill="#e08a3a"/><rect x="30" y="20" width="5.5" height="5.5" fill="#2a1a1a"/><rect x="35" y="20" width="5.5" height="5.5" fill="#e0a878"/><rect x="40" y="20" width="5.5" height="5.5" fill="#e0a878"/><rect x="45" y="20" width="5.5" height="5.5" fill="#2a1a1a"/><rect x="50" y="20" width="5.5" height="5.5" fill="#e08a3a"/><rect x="55" y="20" width="5.5" height="5.5" fill="#cdc8cc"/><rect x="0" y="25" width="5.5" height="5.5" fill="#2a1a1a"/><rect x="5" y="25" width="5.5" height="5.5" fill="#2a1a1a"/><rect x="10" y="25" width="5.5" height="5.5" fill="#e0a878"/><rect x="15" y="25" width="5.5" height="5.5" fill="#e0a878"/><rect x="20" y="25" width="5.5" height="5.5" fill="#e08a3a"/><rect x="25" y="25" width="5.5" height="5.5" fill="#e08a3a"/><rect x="30" y="25" width="5.5" height="5.5" fill="#2a1a1a"/><rect x="35" y="25" width="5.5" height="5.5" fill="#e0a878"/><rect x="40" y="25" width="5.5" height="5.5" fill="#2a1a1a"/><rect x="45" y="25" width="5.5" height="5.5" fill="#2a1a1a"/><rect x="50" y="25" width="5.5" height="5.5" fill="#e08a3a"/><rect x="55" y="25" width="5.5" height="5.5" fill="#e08a3a"/><rect x="0" y="30" width="5.5" height="5.5" fill="#2a1a1a"/><rect x="5" y="30" width="5.5" height="5.5" fill="#e0a878"/><rect x="10" y="30" width="5.5" height="5.5" fill="#e0a878"/><rect x="15" y="30" width="5.5" height="5.5" fill="#e0a878"/><rect x="20" y="30" width="5.5" height="5.5" fill="#e08a3a"/><rect x="25" y="30" width="5.5" height="5.5" fill="#e08a3a"/><rect x="30" y="30" width="5.5" height="5.5" fill="#2a1a1a"/><rect x="35" y="30" width="5.5" height="5.5" fill="#2a1a1a"/><rect x="40" y="30" width="5.5" height="5.5" fill="#7a7c7a"/><rect x="45" y="30" width="5.5" height="5.5" fill="#2a1a1a"/><rect x="50" y="30" width="5.5" height="5.5" fill="#e08a3a"/><rect x="55" y="30" width="5.5" height="5.5" fill="#cdc8cc"/><rect x="0" y="35" width="5.5" height="5.5" fill="#2a1a1a"/><rect x="5" y="35" width="5.5" height="5.5" fill="#e0a878"/><rect x="10" y="35" width="5.5" height="5.5" fill="#e0a878"/><rect x="15" y="35" width="5.5" height="5.5" fill="#2a1a1a"/><rect x="20" y="35" width="5.5" height="5.5" fill="#e0a878"/><rect x="25" y="35" width="5.5" height="5.5" fill="#2a1a1a"/><rect x="30" y="35" width="5.5" height="5.5" fill="#2a1a1a"/><rect x="35" y="35" width="5.5" height="5.5" fill="#7a7c7a"/><rect x="40" y="35" width="5.5" height="5.5" fill="#7a7c7a"/><rect x="45" y="35" width="5.5" height="5.5" fill="#2a1a1a"/><rect x="50" y="35" width="5.5" height="5.5" fill="#7a7c7a"/><rect x="55" y="35" width="5.5" height="5.5" fill="#cdc8cc"/><rect x="0" y="40" width="5.5" height="5.5" fill="#e08a3a"/><rect x="5" y="40" width="5.5" height="5.5" fill="#2a1a1a"/><rect x="10" y="40" width="5.5" height="5.5" fill="#2a1a1a"/><rect x="15" y="40" width="5.5" height="5.5" fill="#2a1a1a"/><rect x="20" y="40" width="5.5" height="5.5" fill="#e0a878"/><rect x="25" y="40" width="5.5" height="5.5" fill="#2a1a1a"/><rect x="30" y="40" width="5.5" height="5.5" fill="#2a1a1a"/><rect x="35" y="40" width="5.5" height="5.5" fill="#7a7c7a"/><rect x="40" y="40" width="5.5" height="5.5" fill="#e0a878"/><rect x="45" y="40" width="5.5" height="5.5" fill="#2a1a1a"/><rect x="50" y="40" width="5.5" height="5.5" fill="#7a7c7a"/><rect x="55" y="40" width="5.5" height="5.5" fill="#cdc8cc"/><rect x="0" y="45" width="5.5" height="5.5" fill="#e08a3a"/><rect x="5" y="45" width="5.5" height="5.5" fill="#2a1a1a"/><rect x="10" y="45" width="5.5" height="5.5" fill="#2a1a1a"/><rect x="15" y="45" width="5.5" height="5.5" fill="#2a1a1a"/><rect x="20" y="45" width="5.5" height="5.5" fill="#cdc8cc"/><rect x="25" y="45" width="5.5" height="5.5" fill="#2a1a1a"/><rect x="30" y="45" width="5.5" height="5.5" fill="#2a1a1a"/><rect x="35" y="45" width="5.5" height="5.5" fill="#7a7c7a"/><rect x="40" y="45" width="5.5" height="5.5" fill="#e0a878"/><rect x="45" y="45" width="5.5" height="5.5" fill="#2a1a1a"/><rect x="50" y="45" width="5.5" height="5.5" fill="#7a7c7a"/><rect x="55" y="45" width="5.5" height="5.5" fill="#cdc8cc"/><rect x="0" y="50" width="5.5" height="5.5" fill="#e08a3a"/><rect x="5" y="50" width="5.5" height="5.5" fill="#e8b070"/><rect x="10" y="50" width="5.5" height="5.5" fill="#e8b070"/><rect x="15" y="50" width="5.5" height="5.5" fill="#e8b070"/><rect x="20" y="50" width="5.5" height="5.5" fill="#e8b070"/><rect x="25" y="50" width="5.5" height="5.5" fill="#e8b070"/><rect x="30" y="50" width="5.5" height="5.5" fill="#cdc8cc"/><rect x="35" y="50" width="5.5" height="5.5" fill="#cdc8cc"/><rect x="40" y="50" width="5.5" height="5.5" fill="#8a5a3a"/><rect x="45" y="50" width="5.5" height="5.5" fill="#e8b070"/><rect x="50" y="50" width="5.5" height="5.5" fill="#e8b070"/><rect x="55" y="50" width="5.5" height="5.5" fill="#e8b070"/><rect x="0" y="55" width="5.5" height="5.5" fill="#e08a3a"/><rect x="5" y="55" width="5.5" height="5.5" fill="#e8b070"/><rect x="10" y="55" width="5.5" height="5.5" fill="#e8b070"/><rect x="15" y="55" width="5.5" height="5.5" fill="#cdc8cc"/><rect x="20" y="55" width="5.5" height="5.5" fill="#8a5a3a"/><rect x="25" y="55" width="5.5" height="5.5" fill="#8a5a3a"/><rect x="30" y="55" width="5.5" height="5.5" fill="#8a5a3a"/><rect x="35" y="55" width="5.5" height="5.5" fill="#8a5a3a"/><rect x="40" y="55" width="5.5" height="5.5" fill="#cdc8cc"/><rect x="45" y="55" width="5.5" height="5.5" fill="#e8b070"/><rect x="50" y="55" width="5.5" height="5.5" fill="#e8b070"/><rect x="55" y="55" width="5.5" height="5.5" fill="#8a5a3a"/></g></svg>
<div class="t" style="left:403.5px;top:616.16px;font-size:13.8px;font-weight:700;color:#2196f3;">Shouls night out</div>
<div class="r" style="left:520.0px;top:614.0px;width:71.0px;height:18.0px;background:#dcfce7;border-radius:9px"></div>
<div class="r" style="left:527.5px;top:621.0px;width:4.0px;height:4.0px;background:#16a34a;border-radius:2px"></div>
<div class="t" style="left:534.8px;top:617.61px;font-size:10.5px;font-weight:700;color:#3c434a;">Published</div>
<div class="t" style="left:403.0px;top:638.84px;font-size:12.0px;font-weight:700;color:#646970;">ID: 149</div>
<div class="r" style="left:403.0px;top:664.0px;width:16.0px;height:4.0px;background:#e3eef7;border-radius:2px"></div>
<svg class="r" style="left:745.0px;top:639.5px" width="9" height="17" viewBox="0 0 9 17"><rect x="3.7" y="7" width="1.3" height="8.8" fill="#5b9bd5"/><circle cx="4.3" cy="4" r="3.9" fill="#d41a22"/><path d="M0.6 3.3A3.9 3.9 0 0 1 4.8 0.1L3.6 3.8z" fill="#e8823a"/></svg>
<div class="t" style="left:761.0px;top:640.73px;font-size:14.5px;font-weight:400;color:#646e7e;">Zombie Park</div>
<div class="t" style="left:934.0px;top:631.95px;font-size:14.0px;font-weight:700;color:#343a40;">October 31, 2024</div>
<div class="t" style="left:934.0px;top:651.62px;font-size:12.5px;font-weight:400;color:#646970;">19:00</div>
<div class="r" style="left:1085.0px;top:637.0px;width:169.0px;height:23.0px;background:#fde2e2;border-radius:12px"></div>
<div class="t" style="left:1085.0px;top:642.84px;width:169px;text-align:center;font-size:12.0px;font-weight:700;color:#a81e1e;">Expired!</div>
<div class="r" style="left:1284.0px;top:611.0px;width:181.0px;height:23.6px;background:#f7f9fb;border-radius:6px"></div>
<div class="t" style="left:1292.4px;top:615.80px;font-size:13.0px;font-weight:400;color:#2c3338;">Single Entry</div>
<div class="t" style="left:1396.5px;top:615.80px;width:60px;text-align:right;font-size:13.0px;font-weight:400;color:#2c3338;">39</div>
<div class="r" style="left:1284.0px;top:639.0px;width:181.0px;height:23.6px;background:#f7f9fb;border-radius:6px"></div>
<div class="t" style="left:1292.4px;top:643.50px;font-size:13.0px;font-weight:400;color:#2c3338;">Couple Entry</div>
<div class="t" style="left:1396.5px;top:643.50px;width:60px;text-align:right;font-size:13.0px;font-weight:400;color:#2c3338;">59</div>
<div class="r" style="left:1284.0px;top:667.0px;width:181.0px;height:19.0px;background:#e2e8f0;border-radius:5px"></div>
<div class="t" style="left:1284.0px;top:670.94px;width:181px;text-align:center;font-size:12.0px;font-weight:400;color:#64748b;">+1 more</div>
<div class="t" style="left:1485.5px;top:626.35px;width:100px;text-align:center;font-size:14.0px;font-weight:700;color:#1d2327;letter-spacing:0.8px">/85</div>
<div class="r" style="left:1506.0px;top:648.0px;width:60.0px;height:6.0px;background:#f1f5f9;border-radius:3px"></div>
<div class="t" style="left:1485.5px;top:660.04px;width:100px;text-align:center;font-size:12.0px;font-weight:400;color:#646970;">Available</div>
<div class="r" style="left:1607.0px;top:632.0px;width:32.0px;height:32.0px;background:#fff;border:1px solid #d5dbe3;border-radius:7px"></div>
<div class="r" style="left:1647.0px;top:632.0px;width:32.0px;height:32.0px;background:#fff;border:1px solid #d5dbe3;border-radius:7px"></div>
<div class="r" style="left:1687.0px;top:632.0px;width:32.0px;height:32.0px;background:#fff;border:1px solid #d5dbe3;border-radius:7px"></div>
<div class="r" style="left:1727.0px;top:632.0px;width:32.0px;height:32.0px;background:#fff;border:1px solid #d5dbe3;border-radius:7px"></div>
<svg class="r" style="left:1614.0px;top:643.0px" width="18" height="11" viewBox="0 0 18 11"><path d="M9 0.75C4.8 0.75 1.8 3.6 0.7 5.5 1.8 7.4 4.8 10.25 9 10.25S16.2 7.4 17.3 5.5C16.2 3.6 13.2 0.75 9 0.75z" fill="none" stroke="#3b82f6" stroke-width="1.5"/><circle cx="9" cy="4.6" r="4.1" fill="#3b82f6"/><circle cx="10.2" cy="3" r="1.05" fill="#fff"/></svg>
<svg class="r" style="left:1655.0px;top:640.0px" width="18" height="17" viewBox="0 0 18 17"><path d="M0 3.2h1.8v10.9h8.1v1.6H0z" fill="#3d3535"/><rect x="3.1" y="1.1" width="8.9" height="11.6" fill="#3d3535"/><line x1="7.9" y1="8.3" x2="15.4" y2="1.3" stroke="#fff" stroke-width="4.4" stroke-linecap="round"/><line x1="7.9" y1="8.3" x2="15.4" y2="1.3" stroke="#3d3535" stroke-width="3.4" stroke-linecap="round"/><line x1="8.1" y1="8.1" x2="14.6" y2="2.1" stroke="#fff" stroke-width="1.8"/></svg>
<svg class="r" style="left:1695.8px;top:640.3px" width="15" height="15" viewBox="0 0 15 15"><path d="M10.35 0.05L14.45 4.15 5.38 13.22 0.2 14.8 1.28 9.12z" fill="#16a34a"/><path d="M5.24 11.38L12.33 4.29 10.21 2.17 3.12 9.26z" fill="#fff"/><path d="M4.18 10.32L11.27 3.23" stroke="#16a34a" stroke-width="0.7"/></svg>
<svg class="r" style="left:1735.5px;top:639.5px" width="14" height="17" viewBox="0 0 14 17"><path d="M4.5 2.6Q4.5 0.5 7 0.5Q9.5 0.5 9.5 2.6" fill="none" stroke="#c81e1e" stroke-width="1.2"/><rect x="0.4" y="2.5" width="13.2" height="1.9" rx="0.6" fill="#c81e1e"/><path d="M1.4 5.6H12.5L11.4 16.5H2.5z" fill="#c81e1e"/></svg>
<div class="r" style="left:241.0px;top:805.9px;width:1533.0px;height:1.0px;background:#eef2f6"></div>
<div class="r" style="left:256.0px;top:746.7px;width:16.0px;height:16.0px;background:#fff;border:1px solid #8c8f94;border-radius:4px"></div>
<svg class="r" style="left:313px;top:723.7px;border-radius:4px" width="60" height="60" viewBox="0 0 60 60"><filter id="bl2" x="0" y="0" width="1" height="1"><feGaussianBlur stdDeviation="1.3"/></filter><g filter="url(#bl2)"><rect x="0" y="0" width="5.5" height="5.5" fill="#c8c4c8"/><rect x="5" y="0" width="5.5" height="5.5" fill="#e0a060"/><rect x="10" y="0" width="5.5" height="5.5" fill="#c8c4c8"/><rect x="15" y="0" width="5.5" height="5.5" fill="#c8c4c8"/><rect x="20" y="0" width="5.5" height="5.5" fill="#c8c4c8"/><rect x="25" y="0" width="5.5" height="5.5" fill="#c8c4c8"/><rect x="30" y="0" width="5.5" height="5.5" fill="#e0a060"/><rect x="35" y="0" width="5.5" height="5.5" fill="#c8c4c8"/><rect x="40" y="0" width="5.5" height="5.5" fill="#c8c4c8"/><rect x="45" y="0" width="5.5" height="5.5" fill="#c8c4c8"/><rect x="50" y="0" width="5.5" height="5.5" fill="#e0a060"/><rect x="55" y="0" width="5.5" height="5.5" fill="#c8c4c8"/><rect x="0" y="5" width="5.5" height="5.5" fill="#c8c4c8"/><rect x="5" y="5" width="5.5" height="5.5" fill="#1e1414"/><rect x="10" y="5" width="5.5" height="5.5" fill="#1e1414"/><rect x="15" y="5" width="5.5" height="5.5" fill="#c8c4c8"/><rect x="20" y="5" width="5.5" height="5.5" fill="#e0a060"/><rect x="25" y="5" width="5.5" height="5.5" fill="#c8c4c8"/><rect x="30" y="5" width="5.5" height="5.5" fill="#e0a060"/><rect x="35" y="5" width="5.5" height="5.5" fill="#c8c4c8"/><rect x="40" y="5" width="5.5" height="5.5" fill="#e0a060"/><rect x="45" y="5" width="5.5" height="5.5" fill="#1e1414"/><rect x="50" y="5" width="5.5" height="5.5" fill="#1e1414"/><rect x="55" y="5" width="5.5" height="5.5" fill="#c8c4c8"/><rect x="0" y="10" width="5.5" height="5.5" fill="#c8c4c8"/><rect x="5" y="10" width="5.5" height="5.5" fill="#1e1414"/><rect x="10" y="10" width="5.5" height="5.5" fill="#d8a888"/><rect x="15" y="10" width="5.5" height="5.5" fill="#c8c4c8"/><rect x="20" y="10" width="5.5" height="5.5" fill="#c8c4c8"/><rect x="25" y="10" width="5.5" height="5.5" fill="#e0a060"/><rect x="30" y="10" width="5.5" height="5.5" fill="#c8c4c8"/><rect x="35" y="10" width="5.5" height="5.5" fill="#c8c4c8"/><rect x="40" y="10" width="5.5" height="5.5" fill="#c8c4c8"/><rect x="45" y="10" width="5.5" height="5.5" fill="#1e1414"/><rect x="50" y="10" width="5.5" height="5.5" fill="#d8a888"/><rect x="55" y="10" width="5.5" height="5.5" fill="#c8c4c8"/><rect x="0" y="15" width="5.5" height="5.5" fill="#f0ecec"/><rect x="5" y="15" width="5.5" height="5.5" fill="#f0ecec"/><rect x="10" y="15" width="5.5" height="5.5" fill="#f0ecec"/><rect x="15" y="15" width="5.5" height="5.5" fill="#c8c4c8"/><rect x="20" y="15" width="5.5" height="5.5" fill="#e0a060"/><rect x="25" y="15" width="5.5" height="5.5" fill="#c8c4c8"/><rect x="30" y="15" width="5.5" height="5.5" fill="#c8c4c8"/><rect x="35" y="15" width="5.5" height="5.5" fill="#c8c4c8"/><rect x="40" y="15" width="5.5" height="5.5" fill="#e0a060"/><rect x="45" y="15" width="5.5" height="5.5" fill="#1e1414"/><rect x="50" y="15" width="5.5" height="5.5" fill="#1e1414"/><rect x="55" y="15" width="5.5" height="5.5" fill="#1e1414"/><rect x="0" y="20" width="5.5" height="5.5" fill="#f0ecec"/><rect x="5" y="20" width="5.5" height="5.5" fill="#f0ecec"/><rect x="10" y="20" width="5.5" height="5.5" fill="#f0ecec"/><rect x="15" y="20" width="5.5" height="5.5" fill="#c8c4c8"/><rect x="20" y="20" width="5.5" height="5.5" fill="#c8c4c8"/><rect x="25" y="20" width="5.5" height="5.5" fill="#1e1414"/><rect x="30" y="20" width="5.5" height="5.5" fill="#1e1414"/><rect x="35" y="20" width="5.5" height="5.5" fill="#c8c4c8"/><rect x="40" y="20" width="5.5" height="5.5" fill="#1e1414"/><rect x="45" y="20" width="5.5" height="5.5" fill="#1e1414"/><rect x="50" y="20" width="5.5" height="5.5" fill="#1e1414"/><rect x="55" y="20" width="5.5" height="5.5" fill="#1e1414"/><rect x="0" y="25" width="5.5" height="5.5" fill="#f0ecec"/><rect x="5" y="25" width="5.5" height="5.5" fill="#f0ecec"/><rect x="10" y="25" width="5.5" height="5.5" fill="#f0ecec"/><rect x="15" y="25" width="5.5" height="5.5" fill="#c8c4c8"/><rect x="20" y="25" width="5.5" height="5.5" fill="#c8c4c8"/><rect x="25" y="25" width="5.5" height="5.5" fill="#1e1414"/><rect x="30" y="25" width="5.5" height="5.5" fill="#d8a888"/><rect x="35" y="25" width="5.5" height="5.5" fill="#c8c4c8"/><rect x="40" y="25" width="5.5" height="5.5" fill="#1e1414"/><rect x="45" y="25" width="5.5" height="5.5" fill="#d8a888"/><rect x="50" y="25" width="5.5" height="5.5" fill="#1e1414"/><rect x="55" y="25" width="5.5" height="5.5" fill="#1e1414"/><rect x="0" y="30" width="5.5" height="5.5" fill="#f0ecec"/><rect x="5" y="30" width="5.5" height="5.5" fill="#f0ecec"/><rect x="10" y="30" width="5.5" height="5.5" fill="#f0ecec"/><rect x="15" y="30" width="5.5" height="5.5" fill="#f0ecec"/><rect x="20" y="30" width="5.5" height="5.5" fill="#d02028"/><rect x="25" y="30" width="5.5" height="5.5" fill="#d02028"/><rect x="30" y="30" width="5.5" height="5.5" fill="#1e1414"/><rect x="35" y="30" width="5.5" height="5.5" fill="#c8c4c8"/><rect x="40" y="30" width="5.5" height="5.5" fill="#1e1414"/><rect x="45" y="30" width="5.5" height="5.5" fill="#1e1414"/><rect x="50" y="30" width="5.5" height="5.5" fill="#1e1414"/><rect x="55" y="30" width="5.5" height="5.5" fill="#1e1414"/><rect x="0" y="35" width="5.5" height="5.5" fill="#1e1414"/><rect x="5" y="35" width="5.5" height="5.5" fill="#1e1414"/><rect x="10" y="35" width="5.5" height="5.5" fill="#1e1414"/><rect x="15" y="35" width="5.5" height="5.5" fill="#d02028"/><rect x="20" y="35" width="5.5" height="5.5" fill="#d02028"/><rect x="25" y="35" width="5.5" height="5.5" fill="#d02028"/><rect x="30" y="35" width="5.5" height="5.5" fill="#d02028"/><rect x="35" y="35" width="5.5" height="5.5" fill="#c8c4c8"/><rect x="40" y="35" width="5.5" height="5.5" fill="#1e1414"/><rect x="45" y="35" width="5.5" height="5.5" fill="#1e1414"/><rect x="50" y="35" width="5.5" height="5.5" fill="#1e1414"/><rect x="55" y="35" width="5.5" height="5.5" fill="#1e1414"/><rect x="0" y="40" width="5.5" height="5.5" fill="#1e1414"/><rect x="5" y="40" width="5.5" height="5.5" fill="#1e1414"/><rect x="10" y="40" width="5.5" height="5.5" fill="#1e1414"/><rect x="15" y="40" width="5.5" height="5.5" fill="#c8c4c8"/><rect x="20" y="40" width="5.5" height="5.5" fill="#d02028"/><rect x="25" y="40" width="5.5" height="5.5" fill="#d02028"/><rect x="30" y="40" width="5.5" height="5.5" fill="#d02028"/><rect x="35" y="40" width="5.5" height="5.5" fill="#606868"/><rect x="40" y="40" width="5.5" height="5.5" fill="#1e1414"/><rect x="45" y="40" width="5.5" height="5.5" fill="#1e1414"/><rect x="50" y="40" width="5.5" height="5.5" fill="#1e1414"/><rect x="55" y="40" width="5.5" height="5.5" fill="#1e1414"/><rect x="0" y="45" width="5.5" height="5.5" fill="#1e1414"/><rect x="5" y="45" width="5.5" height="5.5" fill="#1e1414"/><rect x="10" y="45" width="5.5" height="5.5" fill="#1e1414"/><rect x="15" y="45" width="5.5" height="5.5" fill="#c8c4c8"/><rect x="20" y="45" width="5.5" height="5.5" fill="#d02028"/><rect x="25" y="45" width="5.5" height="5.5" fill="#1e1414"/><rect x="30" y="45" width="5.5" height="5.5" fill="#d02028"/><rect x="35" y="45" width="5.5" height="5.5" fill="#606868"/><rect x="40" y="45" width="5.5" height="5.5" fill="#1e1414"/><rect x="45" y="45" width="5.5" height="5.5" fill="#1e1414"/><rect x="50" y="45" width="5.5" height="5.5" fill="#1e1414"/><rect x="55" y="45" width="5.5" height="5.5" fill="#1e1414"/><rect x="0" y="50" width="5.5" height="5.5" fill="#1e1414"/><rect x="5" y="50" width="5.5" height="5.5" fill="#1e1414"/><rect x="10" y="50" width="5.5" height="5.5" fill="#1e1414"/><rect x="15" y="50" width="5.5" height="5.5" fill="#c8c4c8"/><rect x="20" y="50" width="5.5" height="5.5" fill="#d02028"/><rect x="25" y="50" width="5.5" height="5.5" fill="#d02028"/><rect x="30" y="50" width="5.5" height="5.5" fill="#d02028"/><rect x="35" y="50" width="5.5" height="5.5" fill="#c8c4c8"/><rect x="40" y="50" width="5.5" height="5.5" fill="#1e1414"/><rect x="45" y="50" width="5.5" height="5.5" fill="#1e1414"/><rect x="50" y="50" width="5.5" height="5.5" fill="#1e1414"/><rect x="55" y="50" width="5.5" height="5.5" fill="#606868"/><rect x="0" y="55" width="5.5" height="5.5" fill="#1e1414"/><rect x="5" y="55" width="5.5" height="5.5" fill="#1e1414"/><rect x="10" y="55" width="5.5" height="5.5" fill="#1e1414"/><rect x="15" y="55" width="5.5" height="5.5" fill="#c8c4c8"/><rect x="20" y="55" width="5.5" height="5.5" fill="#d02028"/><rect x="25" y="55" width="5.5" height="5.5" fill="#d02028"/><rect x="30" y="55" width="5.5" height="5.5" fill="#d02028"/><rect x="35" y="55" width="5.5" height="5.5" fill="#c8c4c8"/><rect x="40" y="55" width="5.5" height="5.5" fill="#1e1414"/><rect x="45" y="55" width="5.5" height="5.5" fill="#e0a060"/><rect x="50" y="55" width="5.5" height="5.5" fill="#1e1414"/><rect x="55" y="55" width="5.5" height="5.5" fill="#c8c4c8"/></g></svg>
<div class="t" style="left:403.5px;top:721.86px;font-size:13.8px;font-weight:700;color:#2196f3;">Spooky pumpkin care</div>
<div class="r" style="left:553.0px;top:719.7px;width:71.0px;height:18.0px;background:#dcfce7;border-radius:9px"></div>
<div class="r" style="left:560.5px;top:726.7px;width:4.0px;height:4.0px;background:#16a34a;border-radius:2px"></div>
<div class="t" style="left:567.8px;top:723.31px;font-size:10.5px;font-weight:700;color:#3c434a;">Published</div>
<div class="t" style="left:403.0px;top:744.54px;font-size:12.0px;font-weight:700;color:#646970;">ID: 146</div>
<div class="r" style="left:403.0px;top:769.7px;width:16.0px;height:4.0px;background:#e3eef7;border-radius:2px"></div>
<svg class="r" style="left:745.0px;top:745.2px" width="9" height="17" viewBox="0 0 9 17"><rect x="3.7" y="7" width="1.3" height="8.8" fill="#5b9bd5"/><circle cx="4.3" cy="4" r="3.9" fill="#d41a22"/><path d="M0.6 3.3A3.9 3.9 0 0 1 4.8 0.1L3.6 3.8z" fill="#e8823a"/></svg>
<div class="t" style="left:761.0px;top:746.43px;font-size:14.5px;font-weight:400;color:#646e7e;">Zombie Park</div>
<div class="t" style="left:934.0px;top:737.65px;font-size:14.0px;font-weight:700;color:#343a40;">October 31, 2024</div>
<div class="t" style="left:934.0px;top:757.32px;font-size:12.5px;font-weight:400;color:#646970;">19:00</div>
<div class="r" style="left:1085.0px;top:742.7px;width:169.0px;height:23.0px;background:#fde2e2;border-radius:12px"></div>
<div class="t" style="left:1085.0px;top:748.54px;width:169px;text-align:center;font-size:12.0px;font-weight:700;color:#a81e1e;">Expired!</div>
<div class="r" style="left:1284.0px;top:716.7px;width:181.0px;height:23.6px;background:#f7f9fb;border-radius:6px"></div>
<div class="t" style="left:1292.4px;top:721.50px;font-size:13.0px;font-weight:400;color:#2c3338;">Single Entry</div>
<div class="t" style="left:1396.5px;top:721.50px;width:60px;text-align:right;font-size:13.0px;font-weight:400;color:#2c3338;">39</div>
<div class="r" style="left:1284.0px;top:744.7px;width:181.0px;height:23.6px;background:#f7f9fb;border-radius:6px"></div>
<div class="t" style="left:1292.4px;top:749.20px;font-size:13.0px;font-weight:400;color:#2c3338;">Couple Entry</div>
<div class="t" style="left:1396.5px;top:749.20px;width:60px;text-align:right;font-size:13.0px;font-weight:400;color:#2c3338;">59</div>
<div class="r" style="left:1284.0px;top:772.7px;width:181.0px;height:19.0px;background:#e2e8f0;border-radius:5px"></div>
<div class="t" style="left:1284.0px;top:776.64px;width:181px;text-align:center;font-size:12.0px;font-weight:400;color:#64748b;">+1 more</div>
<div class="t" style="left:1485.5px;top:732.05px;width:100px;text-align:center;font-size:14.0px;font-weight:700;color:#1d2327;letter-spacing:0.8px">/85</div>
<div class="r" style="left:1506.0px;top:753.7px;width:60.0px;height:6.0px;background:#f1f5f9;border-radius:3px"></div>
<div class="t" style="left:1485.5px;top:765.74px;width:100px;text-align:center;font-size:12.0px;font-weight:400;color:#646970;">Available</div>
<div class="r" style="left:1607.0px;top:737.7px;width:32.0px;height:32.0px;background:#fff;border:1px solid #d5dbe3;border-radius:7px"></div>
<div class="r" style="left:1647.0px;top:737.7px;width:32.0px;height:32.0px;background:#fff;border:1px solid #d5dbe3;border-radius:7px"></div>
<div class="r" style="left:1687.0px;top:737.7px;width:32.0px;height:32.0px;background:#fff;border:1px solid #d5dbe3;border-radius:7px"></div>
<div class="r" style="left:1727.0px;top:737.7px;width:32.0px;height:32.0px;background:#fff;border:1px solid #d5dbe3;border-radius:7px"></div>
<svg class="r" style="left:1614.0px;top:748.7px" width="18" height="11" viewBox="0 0 18 11"><path d="M9 0.75C4.8 0.75 1.8 3.6 0.7 5.5 1.8 7.4 4.8 10.25 9 10.25S16.2 7.4 17.3 5.5C16.2 3.6 13.2 0.75 9 0.75z" fill="none" stroke="#3b82f6" stroke-width="1.5"/><circle cx="9" cy="4.6" r="4.1" fill="#3b82f6"/><circle cx="10.2" cy="3" r="1.05" fill="#fff"/></svg>
<svg class="r" style="left:1655.0px;top:745.7px" width="18" height="17" viewBox="0 0 18 17"><path d="M0 3.2h1.8v10.9h8.1v1.6H0z" fill="#3d3535"/><rect x="3.1" y="1.1" width="8.9" height="11.6" fill="#3d3535"/><line x1="7.9" y1="8.3" x2="15.4" y2="1.3" stroke="#fff" stroke-width="4.4" stroke-linecap="round"/><line x1="7.9" y1="8.3" x2="15.4" y2="1.3" stroke="#3d3535" stroke-width="3.4" stroke-linecap="round"/><line x1="8.1" y1="8.1" x2="14.6" y2="2.1" stroke="#fff" stroke-width="1.8"/></svg>
<svg class="r" style="left:1695.8px;top:746.0px" width="15" height="15" viewBox="0 0 15 15"><path d="M10.35 0.05L14.45 4.15 5.38 13.22 0.2 14.8 1.28 9.12z" fill="#16a34a"/><path d="M5.24 11.38L12.33 4.29 10.21 2.17 3.12 9.26z" fill="#fff"/><path d="M4.18 10.32L11.27 3.23" stroke="#16a34a" stroke-width="0.7"/></svg>
<svg class="r" style="left:1735.5px;top:745.2px" width="14" height="17" viewBox="0 0 14 17"><path d="M4.5 2.6Q4.5 0.5 7 0.5Q9.5 0.5 9.5 2.6" fill="none" stroke="#c81e1e" stroke-width="1.2"/><rect x="0.4" y="2.5" width="13.2" height="1.9" rx="0.6" fill="#c81e1e"/><path d="M1.4 5.6H12.5L11.4 16.5H2.5z" fill="#c81e1e"/></svg>
<div class="r" style="left:241.0px;top:912.1px;width:1533.0px;height:1.0px;background:#eef2f6"></div>
<div class="r" style="left:256.0px;top:851.9px;width:16.0px;height:16.0px;background:#fff;border:1px solid #8c8f94;border-radius:4px"></div>
<svg class="r" style="left:313px;top:828.9px;border-radius:4px" width="60" height="60" viewBox="0 0 60 60"><filter id="bl3" x="0" y="0" width="1" height="1"><feGaussianBlur stdDeviation="1.3"/></filter><g filter="url(#bl3)"><rect x="0" y="0" width="5.5" height="5.5" fill="#c87838"/><rect x="5" y="0" width="5.5" height="5.5" fill="#c87838"/><rect x="10" y="0" width="5.5" height="5.5" fill="#c87838"/><rect x="15" y="0" width="5.5" height="5.5" fill="#e0a050"/><rect x="20" y="0" width="5.5" height="5.5" fill="#e0a050"/><rect x="25" y="0" width="5.5" height="5.5" fill="#e0a050"/><rect x="30" y="0" width="5.5" height="5.5" fill="#e0a050"/><rect x="35" y="0" width="5.5" height="5.5" fill="#c87838"/><rect x="40" y="0" width="5.5" height="5.5" fill="#5a3a2a"/><rect x="45" y="0" width="5.5" height="5.5" fill="#5a3a2a"/><rect x="50" y="0" width="5.5" height="5.5" fill="#5a3a2a"/><rect x="55" y="0" width="5.5" height="5.5" fill="#5a3a2a"/><rect x="0" y="5" width="5.5" height="5.5" fill="#c87838"/><rect x="5" y="5" width="5.5" height="5.5" fill="#c87838"/><rect x="10" y="5" width="5.5" height="5.5" fill="#1e1414"/><rect x="15" y="5" width="5.5" height="5.5" fill="#e0a050"/><rect x="20" y="5" width="5.5" height="5.5" fill="#e0a050"/><rect x="25" y="5" width="5.5" height="5.5" fill="#e0a050"/><rect x="30" y="5" width="5.5" height="5.5" fill="#e0a050"/><rect x="35" y="5" width="5.5" height="5.5" fill="#e0a050"/><rect x="40" y="5" width="5.5" height="5.5" fill="#c87838"/><rect x="45" y="5" width="5.5" height="5.5" fill="#5a3a2a"/><rect x="50" y="5" width="5.5" height="5.5" fill="#5a3a2a"/><rect x="55" y="5" width="5.5" height="5.5" fill="#5a3a2a"/><rect x="0" y="10" width="5.5" height="5.5" fill="#c87838"/><rect x="5" y="10" width="5.5" height="5.5" fill="#c87838"/><rect x="10" y="10" width="5.5" height="5.5" fill="#1e1414"/><rect x="15" y="10" width="5.5" height="5.5" fill="#e0a050"/><rect x="20" y="10" width="5.5" height="5.5" fill="#f0d820"/><rect x="25" y="10" width="5.5" height="5.5" fill="#f0d820"/><rect x="30" y="10" width="5.5" height="5.5" fill="#e0a050"/><rect x="35" y="10" width="5.5" height="5.5" fill="#e8e4e8"/><rect x="40" y="10" width="5.5" height="5.5" fill="#1e1414"/><rect x="45" y="10" width="5.5" height="5.5" fill="#c87838"/><rect x="50" y="10" width="5.5" height="5.5" fill="#5a3a2a"/><rect x="55" y="10" width="5.5" height="5.5" fill="#5a3a2a"/><rect x="0" y="15" width="5.5" height="5.5" fill="#c87838"/><rect x="5" y="15" width="5.5" height="5.5" fill="#1e1414"/><rect x="10" y="15" width="5.5" height="5.5" fill="#1e1414"/><rect x="15" y="15" width="5.5" height="5.5" fill="#f0d820"/><rect x="20" y="15" width="5.5" height="5.5" fill="#f0d820"/><rect x="25" y="15" width="5.5" height="5.5" fill="#f0d820"/><rect x="30" y="15" width="5.5" height="5.5" fill="#f0d820"/><rect x="35" y="15" width="5.5" height="5.5" fill="#e8e4e8"/><rect x="40" y="15" width="5.5" height="5.5" fill="#1e1414"/><rect x="45" y="15" width="5.5" height="5.5" fill="#1e1414"/><rect x="50" y="15" width="5.5" height="5.5" fill="#5a3a2a"/><rect x="55" y="15" width="5.5" height="5.5" fill="#5a3a2a"/><rect x="0" y="20" width="5.5" height="5.5" fill="#c87838"/><rect x="5" y="20" width="5.5" height="5.5" fill="#1e1414"/><rect x="10" y="20" width="5.5" height="5.5" fill="#1e1414"/><rect x="15" y="20" width="5.5" height="5.5" fill="#d8a070"/><rect x="20" y="20" width="5.5" height="5.5" fill="#f0d820"/><rect x="25" y="20" width="5.5" height="5.5" fill="#f0d820"/><rect x="30" y="20" width="5.5" height="5.5" fill="#f0d820"/><rect x="35" y="20" width="5.5" height="5.5" fill="#e8e4e8"/><rect x="40" y="20" width="5.5" height="5.5" fill="#1e1414"/><rect x="45" y="20" width="5.5" height="5.5" fill="#1e1414"/><rect x="50" y="20" width="5.5" height="5.5" fill="#1e1414"/><rect x="55" y="20" width="5.5" height="5.5" fill="#5a3a2a"/><rect x="0" y="25" width="5.5" height="5.5" fill="#1e1414"/><rect x="5" y="25" width="5.5" height="5.5" fill="#1e1414"/><rect x="10" y="25" width="5.5" height="5.5" fill="#1e1414"/><rect x="15" y="25" width="5.5" height="5.5" fill="#d8a070"/><rect x="20" y="25" width="5.5" height="5.5" fill="#f0d820"/><rect x="25" y="25" width="5.5" height="5.5" fill="#f0d820"/><rect x="30" y="25" width="5.5" height="5.5" fill="#1e1414"/><rect x="35" y="25" width="5.5" height="5.5" fill="#1e1414"/><rect x="40" y="25" width="5.5" height="5.5" fill="#1e1414"/><rect x="45" y="25" width="5.5" height="5.5" fill="#1e1414"/><rect x="50" y="25" width="5.5" height="5.5" fill="#1e1414"/><rect x="55" y="25" width="5.5" height="5.5" fill="#5a3a2a"/><rect x="0" y="30" width="5.5" height="5.5" fill="#1e1414"/><rect x="5" y="30" width="5.5" height="5.5" fill="#1e1414"/><rect x="10" y="30" width="5.5" height="5.5" fill="#d02028"/><rect x="15" y="30" width="5.5" height="5.5" fill="#d8a070"/><rect x="20" y="30" width="5.5" height="5.5" fill="#d02028"/><rect x="25" y="30" width="5.5" height="5.5" fill="#1e1414"/><rect x="30" y="30" width="5.5" height="5.5" fill="#1e1414"/><rect x="35" y="30" width="5.5" height="5.5" fill="#1e1414"/><rect x="40" y="30" width="5.5" height="5.5" fill="#1e1414"/><rect x="45" y="30" width="5.5" height="5.5" fill="#1e1414"/><rect x="50" y="30" width="5.5" height="5.5" fill="#1e1414"/><rect x="55" y="30" width="5.5" height="5.5" fill="#5a3a2a"/><rect x="0" y="35" width="5.5" height="5.5" fill="#1e1414"/><rect x="5" y="35" width="5.5" height="5.5" fill="#d02028"/><rect x="10" y="35" width="5.5" height="5.5" fill="#d8a070"/><rect x="15" y="35" width="5.5" height="5.5" fill="#1e1414"/><rect x="20" y="35" width="5.5" height="5.5" fill="#1e1414"/><rect x="25" y="35" width="5.5" height="5.5" fill="#1e1414"/><rect x="30" y="35" width="5.5" height="5.5" fill="#d8a070"/><rect x="35" y="35" width="5.5" height="5.5" fill="#1e1414"/><rect x="40" y="35" width="5.5" height="5.5" fill="#1e1414"/><rect x="45" y="35" width="5.5" height="5.5" fill="#1e1414"/><rect x="50" y="35" width="5.5" height="5.5" fill="#1e1414"/><rect x="55" y="35" width="5.5" height="5.5" fill="#5a3a2a"/><rect x="0" y="40" width="5.5" height="5.5" fill="#d02028"/><rect x="5" y="40" width="5.5" height="5.5" fill="#d8a070"/><rect x="10" y="40" width="5.5" height="5.5" fill="#1e1414"/><rect x="15" y="40" width="5.5" height="5.5" fill="#1e1414"/><rect x="20" y="40" width="5.5" height="5.5" fill="#1e1414"/><rect x="25" y="40" width="5.5" height="5.5" fill="#d8a070"/><rect x="30" y="40" width="5.5" height="5.5" fill="#90b8e0"/><rect x="35" y="40" width="5.5" height="5.5" fill="#1e1414"/><rect x="40" y="40" width="5.5" height="5.5" fill="#1e1414"/><rect x="45" y="40" width="5.5" height="5.5" fill="#1e1414"/><rect x="50" y="40" width="5.5" height="5.5" fill="#1e1414"/><rect x="55" y="40" width="5.5" height="5.5" fill="#1e1414"/><rect x="0" y="45" width="5.5" height="5.5" fill="#1e1414"/><rect x="5" y="45" width="5.5" height="5.5" fill="#d8a070"/><rect x="10" y="45" width="5.5" height="5.5" fill="#d8a070"/><rect x="15" y="45" width="5.5" height="5.5" fill="#1e1414"/><rect x="20" y="45" width="5.5" height="5.5" fill="#e0a050"/><rect x="25" y="45" width="5.5" height="5.5" fill="#d8a070"/><rect x="30" y="45" width="5.5" height="5.5" fill="#90b8e0"/><rect x="35" y="45" width="5.5" height="5.5" fill="#90b8e0"/><rect x="40" y="45" width="5.5" height="5.5" fill="#1e1414"/><rect x="45" y="45" width="5.5" height="5.5" fill="#1e1414"/><rect x="50" y="45" width="5.5" height="5.5" fill="#1e1414"/><rect x="55" y="45" width="5.5" height="5.5" fill="#1e1414"/><rect x="0" y="50" width="5.5" height="5.5" fill="#1e1414"/><rect x="5" y="50" width="5.5" height="5.5" fill="#d8a070"/><rect x="10" y="50" width="5.5" height="5.5" fill="#d8a070"/><rect x="15" y="50" width="5.5" height="5.5" fill="#5a3a2a"/><rect x="20" y="50" width="5.5" height="5.5" fill="#e0a050"/><rect x="25" y="50" width="5.5" height="5.5" fill="#e0a050"/><rect x="30" y="50" width="5.5" height="5.5" fill="#90b8e0"/><rect x="35" y="50" width="5.5" height="5.5" fill="#90b8e0"/><rect x="40" y="50" width="5.5" height="5.5" fill="#5a3a2a"/><rect x="45" y="50" width="5.5" height="5.5" fill="#e0a050"/><rect x="50" y="50" width="5.5" height="5.5" fill="#e0a050"/><rect x="55" y="50" width="5.5" height="5.5" fill="#e0a050"/><rect x="0" y="55" width="5.5" height="5.5" fill="#1e1414"/><rect x="5" y="55" width="5.5" height="5.5" fill="#d8a070"/><rect x="10" y="55" width="5.5" height="5.5" fill="#d8a070"/><rect x="15" y="55" width="5.5" height="5.5" fill="#5a3a2a"/><rect x="20" y="55" width="5.5" height="5.5" fill="#e0a050"/><rect x="25" y="55" width="5.5" height="5.5" fill="#d02028"/><rect x="30" y="55" width="5.5" height="5.5" fill="#d02028"/><rect x="35" y="55" width="5.5" height="5.5" fill="#90b8e0"/><rect x="40" y="55" width="5.5" height="5.5" fill="#5a3a2a"/><rect x="45" y="55" width="5.5" height="5.5" fill="#e0a050"/><rect x="50" y="55" width="5.5" height="5.5" fill="#e0a050"/><rect x="55" y="55" width="5.5" height="5.5" fill="#e0a050"/></g></svg>
<div class="t" style="left:403.5px;top:827.06px;font-size:13.8px;font-weight:700;color:#2196f3;">Costume Party Night</div>
<div class="r" style="left:550.0px;top:824.9px;width:71.0px;height:18.0px;background:#dcfce7;border-radius:9px"></div>
<div class="r" style="left:557.5px;top:831.9px;width:4.0px;height:4.0px;background:#16a34a;border-radius:2px"></div>
<div class="t" style="left:564.8px;top:828.51px;font-size:10.5px;font-weight:700;color:#3c434a;">Published</div>
<div class="t" style="left:403.0px;top:849.74px;font-size:12.0px;font-weight:700;color:#646970;">ID: 143</div>
<div class="r" style="left:403.0px;top:874.9px;width:16.0px;height:4.0px;background:#e3eef7;border-radius:2px"></div>
<svg class="r" style="left:745.0px;top:850.4px" width="9" height="17" viewBox="0 0 9 17"><rect x="3.7" y="7" width="1.3" height="8.8" fill="#5b9bd5"/><circle cx="4.3" cy="4" r="3.9" fill="#d41a22"/><path d="M0.6 3.3A3.9 3.9 0 0 1 4.8 0.1L3.6 3.8z" fill="#e8823a"/></svg>
<div class="t" style="left:761.0px;top:851.63px;font-size:14.5px;font-weight:400;color:#646e7e;">Zombie Park</div>
<div class="t" style="left:934.0px;top:842.85px;font-size:14.0px;font-weight:700;color:#343a40;">October 31, 2024</div>
<div class="t" style="left:934.0px;top:862.52px;font-size:12.5px;font-weight:400;color:#646970;">19:00</div>
<div class="r" style="left:1085.0px;top:847.9px;width:169.0px;height:23.0px;background:#fde2e2;border-radius:12px"></div>
<div class="t" style="left:1085.0px;top:853.74px;width:169px;text-align:center;font-size:12.0px;font-weight:700;color:#a81e1e;">Expired!</div>
<div class="r" style="left:1284.0px;top:821.9px;width:181.0px;height:23.6px;background:#f7f9fb;border-radius:6px"></div>
<div class="t" style="left:1292.4px;top:826.70px;font-size:13.0px;font-weight:400;color:#2c3338;">Single Entry</div>
<div class="t" style="left:1396.5px;top:826.70px;width:60px;text-align:right;font-size:13.0px;font-weight:400;color:#2c3338;">39</div>
<div class="r" style="left:1284.0px;top:849.9px;width:181.0px;height:23.6px;background:#f7f9fb;border-radius:6px"></div>
<div class="t" style="left:1292.4px;top:854.40px;font-size:13.0px;font-weight:400;color:#2c3338;">Couple Entry</div>
<div class="t" style="left:1396.5px;top:854.40px;width:60px;text-align:right;font-size:13.0px;font-weight:400;color:#2c3338;">59</div>
<div class="r" style="left:1284.0px;top:877.9px;width:181.0px;height:19.0px;background:#e2e8f0;border-radius:5px"></div>
<div class="t" style="left:1284.0px;top:881.84px;width:181px;text-align:center;font-size:12.0px;font-weight:400;color:#64748b;">+1 more</div>
<div class="t" style="left:1485.5px;top:837.25px;width:100px;text-align:center;font-size:14.0px;font-weight:700;color:#1d2327;letter-spacing:0.8px">/85</div>
<div class="r" style="left:1506.0px;top:858.9px;width:60.0px;height:6.0px;background:#f1f5f9;border-radius:3px"></div>
<div class="t" style="left:1485.5px;top:870.94px;width:100px;text-align:center;font-size:12.0px;font-weight:400;color:#646970;">Available</div>
<div class="r" style="left:1607.0px;top:842.9px;width:32.0px;height:32.0px;background:#fff;border:1px solid #d5dbe3;border-radius:7px"></div>
<div class="r" style="left:1647.0px;top:842.9px;width:32.0px;height:32.0px;background:#fff;border:1px solid #d5dbe3;border-radius:7px"></div>
<div class="r" style="left:1687.0px;top:842.9px;width:32.0px;height:32.0px;background:#fff;border:1px solid #d5dbe3;border-radius:7px"></div>
<div class="r" style="left:1727.0px;top:842.9px;width:32.0px;height:32.0px;background:#fff;border:1px solid #d5dbe3;border-radius:7px"></div>
<svg class="r" style="left:1614.0px;top:853.9px" width="18" height="11" viewBox="0 0 18 11"><path d="M9 0.75C4.8 0.75 1.8 3.6 0.7 5.5 1.8 7.4 4.8 10.25 9 10.25S16.2 7.4 17.3 5.5C16.2 3.6 13.2 0.75 9 0.75z" fill="none" stroke="#3b82f6" stroke-width="1.5"/><circle cx="9" cy="4.6" r="4.1" fill="#3b82f6"/><circle cx="10.2" cy="3" r="1.05" fill="#fff"/></svg>
<svg class="r" style="left:1655.0px;top:850.9px" width="18" height="17" viewBox="0 0 18 17"><path d="M0 3.2h1.8v10.9h8.1v1.6H0z" fill="#3d3535"/><rect x="3.1" y="1.1" width="8.9" height="11.6" fill="#3d3535"/><line x1="7.9" y1="8.3" x2="15.4" y2="1.3" stroke="#fff" stroke-width="4.4" stroke-linecap="round"/><line x1="7.9" y1="8.3" x2="15.4" y2="1.3" stroke="#3d3535" stroke-width="3.4" stroke-linecap="round"/><line x1="8.1" y1="8.1" x2="14.6" y2="2.1" stroke="#fff" stroke-width="1.8"/></svg>
<svg class="r" style="left:1695.8px;top:851.2px" width="15" height="15" viewBox="0 0 15 15"><path d="M10.35 0.05L14.45 4.15 5.38 13.22 0.2 14.8 1.28 9.12z" fill="#16a34a"/><path d="M5.24 11.38L12.33 4.29 10.21 2.17 3.12 9.26z" fill="#fff"/><path d="M4.18 10.32L11.27 3.23" stroke="#16a34a" stroke-width="0.7"/></svg>
<svg class="r" style="left:1735.5px;top:850.4px" width="14" height="17" viewBox="0 0 14 17"><path d="M4.5 2.6Q4.5 0.5 7 0.5Q9.5 0.5 9.5 2.6" fill="none" stroke="#c81e1e" stroke-width="1.2"/><rect x="0.4" y="2.5" width="13.2" height="1.9" rx="0.6" fill="#c81e1e"/><path d="M1.4 5.6H12.5L11.4 16.5H2.5z" fill="#c81e1e"/></svg>
<div class="r" style="left:256.0px;top:958.1px;width:16.0px;height:16.0px;background:#fff;border:1px solid #8c8f94;border-radius:4px"></div>
<svg class="r" style="left:313px;top:935.1px;border-radius:4px" width="60" height="60" viewBox="0 0 60 60"><filter id="bl0" x="0" y="0" width="1" height="1"><feGaussianBlur stdDeviation="1.3"/></filter><g filter="url(#bl0)"><rect x="0" y="0" width="5.5" height="5.5" fill="#ddd8d4"/><rect x="5" y="0" width="5.5" height="5.5" fill="#d9a070"/><rect x="10" y="0" width="5.5" height="5.5" fill="#ddd8d4"/><rect x="15" y="0" width="5.5" height="5.5" fill="#c0c0c8"/><rect x="20" y="0" width="5.5" height="5.5" fill="#ddd8d4"/><rect x="25" y="0" width="5.5" height="5.5" fill="#ddd8d4"/><rect x="30" y="0" width="5.5" height="5.5" fill="#ddd8d4"/><rect x="35" y="0" width="5.5" height="5.5" fill="#c0c0c8"/><rect x="40" y="0" width="5.5" height="5.5" fill="#c0c0c8"/><rect x="45" y="0" width="5.5" height="5.5" fill="#ddd8d4"/><rect x="50" y="0" width="5.5" height="5.5" fill="#d9a070"/><rect x="55" y="0" width="5.5" height="5.5" fill="#ddd8d4"/><rect x="0" y="5" width="5.5" height="5.5" fill="#ddd8d4"/><rect x="5" y="5" width="5.5" height="5.5" fill="#2a1c1c"/><rect x="10" y="5" width="5.5" height="5.5" fill="#2a1c1c"/><rect x="15" y="5" width="5.5" height="5.5" fill="#ddd8d4"/><rect x="20" y="5" width="5.5" height="5.5" fill="#d9a070"/><rect x="25" y="5" width="5.5" height="5.5" fill="#ddd8d4"/><rect x="30" y="5" width="5.5" height="5.5" fill="#2a1c1c"/><rect x="35" y="5" width="5.5" height="5.5" fill="#2a1c1c"/><rect x="40" y="5" width="5.5" height="5.5" fill="#ddd8d4"/><rect x="45" y="5" width="5.5" height="5.5" fill="#c0c0c8"/><rect x="50" y="5" width="5.5" height="5.5" fill="#ddd8d4"/><rect x="55" y="5" width="5.5" height="5.5" fill="#d8b890"/><rect x="0" y="10" width="5.5" height="5.5" fill="#d8b890"/><rect x="5" y="10" width="5.5" height="5.5" fill="#2a1c1c"/><rect x="10" y="10" width="5.5" height="5.5" fill="#2a1c1c"/><rect x="15" y="10" width="5.5" height="5.5" fill="#d8b890"/><rect x="20" y="10" width="5.5" height="5.5" fill="#ddd8d4"/><rect x="25" y="10" width="5.5" height="5.5" fill="#2a1c1c"/><rect x="30" y="10" width="5.5" height="5.5" fill="#2a1c1c"/><rect x="35" y="10" width="5.5" height="5.5" fill="#2a1c1c"/><rect x="40" y="10" width="5.5" height="5.5" fill="#2a1c1c"/><rect x="45" y="10" width="5.5" height="5.5" fill="#ddd8d4"/><rect x="50" y="10" width="5.5" height="5.5" fill="#d8b890"/><rect x="55" y="10" width="5.5" height="5.5" fill="#d8b890"/><rect x="0" y="15" width="5.5" height="5.5" fill="#d8b890"/><rect x="5" y="15" width="5.5" height="5.5" fill="#d8b890"/><rect x="10" y="15" width="5.5" height="5.5" fill="#8a6a50"/><rect x="15" y="15" width="5.5" height="5.5" fill="#d8b890"/><rect x="20" y="15" width="5.5" height="5.5" fill="#ddd8d4"/><rect x="25" y="15" width="5.5" height="5.5" fill="#c8202a"/><rect x="30" y="15" width="5.5" height="5.5" fill="#2a1c1c"/><rect x="35" y="15" width="5.5" height="5.5" fill="#2a1c1c"/><rect x="40" y="15" width="5.5" height="5.5" fill="#c8202a"/><rect x="45" y="15" width="5.5" height="5.5" fill="#ddd8d4"/><rect x="50" y="15" width="5.5" height="5.5" fill="#1c1618"/><rect x="55" y="15" width="5.5" height="5.5" fill="#d8b890"/><rect x="0" y="20" width="5.5" height="5.5" fill="#d8b890"/><rect x="5" y="20" width="5.5" height="5.5" fill="#8a6a50"/><rect x="10" y="20" width="5.5" height="5.5" fill="#d8b890"/><rect x="15" y="20" width="5.5" height="5.5" fill="#d8b890"/><rect x="20" y="20" width="5.5" height="5.5" fill="#c8202a"/><rect x="25" y="20" width="5.5" height="5.5" fill="#c8202a"/><rect x="30" y="20" width="5.5" height="5.5" fill="#c8202a"/><rect x="35" y="20" width="5.5" height="5.5" fill="#c8202a"/><rect x="40" y="20" width="5.5" height="5.5" fill="#c8202a"/><rect x="45" y="20" width="5.5" height="5.5" fill="#c8202a"/><rect x="50" y="20" width="5.5" height="5.5" fill="#1c1618"/><rect x="55" y="20" width="5.5" height="5.5" fill="#1c1618"/><rect x="0" y="25" width="5.5" height="5.5" fill="#8a6a50"/><rect x="5" y="25" width="5.5" height="5.5" fill="#d8b890"/><rect x="10" y="25" width="5.5" height="5.5" fill="#d8b890"/><rect x="15" y="25" width="5.5" height="5.5" fill="#d8b890"/><rect x="20" y="25" width="5.5" height="5.5" fill="#c8202a"/><rect x="25" y="25" width="5.5" height="5.5" fill="#c8202a"/><rect x="30" y="25" width="5.5" height="5.5" fill="#c8202a"/><rect x="35" y="25" width="5.5" height="5.5" fill="#c8202a"/><rect x="40" y="25" width="5.5" height="5.5" fill="#c8202a"/><rect x="45" y="25" width="5.5" height="5.5" fill="#2a1c1c"/><rect x="50" y="25" width="5.5" height="5.5" fill="#1c1618"/><rect x="55" y="25" width="5.5" height="5.5" fill="#1c1618"/><rect x="0" y="30" width="5.5" height="5.5" fill="#f0d020"/><rect x="5" y="30" width="5.5" height="5.5" fill="#8a6a50"/><rect x="10" y="30" width="5.5" height="5.5" fill="#d8b890"/><rect x="15" y="30" width="5.5" height="5.5" fill="#d8b890"/><rect x="20" y="30" width="5.5" height="5.5" fill="#c8202a"/><rect x="25" y="30" width="5.5" height="5.5" fill="#c8202a"/><rect x="30" y="30" width="5.5" height="5.5" fill="#c8202a"/><rect x="35" y="30" width="5.5" height="5.5" fill="#c8202a"/><rect x="40" y="30" width="5.5" height="5.5" fill="#c8202a"/><rect x="45" y="30" width="5.5" height="5.5" fill="#d8b890"/><rect x="50" y="30" width="5.5" height="5.5" fill="#1c1618"/><rect x="55" y="30" width="5.5" height="5.5" fill="#1c1618"/><rect x="0" y="35" width="5.5" height="5.5" fill="#f0d020"/><rect x="5" y="35" width="5.5" height="5.5" fill="#f0d020"/><rect x="10" y="35" width="5.5" height="5.5" fill="#1c1618"/><rect x="15" y="35" width="5.5" height="5.5" fill="#d8b890"/><rect x="20" y="35" width="5.5" height="5.5" fill="#c8202a"/><rect x="25" y="35" width="5.5" height="5.5" fill="#c8202a"/><rect x="30" y="35" width="5.5" height="5.5" fill="#c8202a"/><rect x="35" y="35" width="5.5" height="5.5" fill="#c8202a"/><rect x="40" y="35" width="5.5" height="5.5" fill="#2a1c1c"/><rect x="45" y="35" width="5.5" height="5.5" fill="#d8b890"/><rect x="50" y="35" width="5.5" height="5.5" fill="#1c1618"/><rect x="55" y="35" width="5.5" height="5.5" fill="#1c1618"/><rect x="0" y="40" width="5.5" height="5.5" fill="#d8b890"/><rect x="5" y="40" width="5.5" height="5.5" fill="#1c1618"/><rect x="10" y="40" width="5.5" height="5.5" fill="#1c1618"/><rect x="15" y="40" width="5.5" height="5.5" fill="#ddd8d4"/><rect x="20" y="40" width="5.5" height="5.5" fill="#1c1618"/><rect x="25" y="40" width="5.5" height="5.5" fill="#c8202a"/><rect x="30" y="40" width="5.5" height="5.5" fill="#c8202a"/><rect x="35" y="40" width="5.5" height="5.5" fill="#c8202a"/><rect x="40" y="40" width="5.5" height="5.5" fill="#2a1c1c"/><rect x="45" y="40" width="5.5" height="5.5" fill="#1c1618"/><rect x="50" y="40" width="5.5" height="5.5" fill="#1c1618"/><rect x="55" y="40" width="5.5" height="5.5" fill="#1c1618"/><rect x="0" y="45" width="5.5" height="5.5" fill="#8a6a50"/><rect x="5" y="45" width="5.5" height="5.5" fill="#1c1618"/><rect x="10" y="45" width="5.5" height="5.5" fill="#c0c0c8"/><rect x="15" y="45" width="5.5" height="5.5" fill="#ddd8d4"/><rect x="20" y="45" width="5.5" height="5.5" fill="#1c1618"/><rect x="25" y="45" width="5.5" height="5.5" fill="#1c1618"/><rect x="30" y="45" width="5.5" height="5.5" fill="#2a1c1c"/><rect x="35" y="45" width="5.5" height="5.5" fill="#b8b0aa"/><rect x="40" y="45" width="5.5" height="5.5" fill="#b8b0aa"/><rect x="45" y="45" width="5.5" height="5.5" fill="#b8b0aa"/><rect x="50" y="45" width="5.5" height="5.5" fill="#1c1618"/><rect x="55" y="45" width="5.5" height="5.5" fill="#1c1618"/><rect x="0" y="50" width="5.5" height="5.5" fill="#8a6a50"/><rect x="5" y="50" width="5.5" height="5.5" fill="#1c1618"/><rect x="10" y="50" width="5.5" height="5.5" fill="#ddd8d4"/><rect x="15" y="50" width="5.5" height="5.5" fill="#c0c0c8"/><rect x="20" y="50" width="5.5" height="5.5" fill="#1c1618"/><rect x="25" y="50" width="5.5" height="5.5" fill="#3070c0"/><rect x="30" y="50" width="5.5" height="5.5" fill="#1c1618"/><rect x="35" y="50" width="5.5" height="5.5" fill="#b8b0aa"/><rect x="40" y="50" width="5.5" height="5.5" fill="#b8b0aa"/><rect x="45" y="50" width="5.5" height="5.5" fill="#b8b0aa"/><rect x="50" y="50" width="5.5" height="5.5" fill="#1c1618"/><rect x="55" y="50" width="5.5" height="5.5" fill="#1c1618"/><rect x="0" y="55" width="5.5" height="5.5" fill="#8a6a50"/><rect x="5" y="55" width="5.5" height="5.5" fill="#1c1618"/><rect x="10" y="55" width="5.5" height="5.5" fill="#8a6a50"/><rect x="15" y="55" width="5.5" height="5.5" fill="#ddd8d4"/><rect x="20" y="55" width="5.5" height="5.5" fill="#1c1618"/><rect x="25" y="55" width="5.5" height="5.5" fill="#1c1618"/><rect x="30" y="55" width="5.5" height="5.5" fill="#1c1618"/><rect x="35" y="55" width="5.5" height="5.5" fill="#8a6a50"/><rect x="40" y="55" width="5.5" height="5.5" fill="#b8b0aa"/><rect x="45" y="55" width="5.5" height="5.5" fill="#ddd8d4"/><rect x="50" y="55" width="5.5" height="5.5" fill="#1c1618"/><rect x="55" y="55" width="5.5" height="5.5" fill="#1c1618"/></g></svg>
<div class="t" style="left:403.5px;top:933.26px;font-size:13.8px;font-weight:700;color:#2196f3;">Halloween Bash</div>
<div class="r" style="left:2000.0px;top:931.1px;width:71.0px;height:18.0px;background:#dcfce7;border-radius:9px"></div>
<div class="r" style="left:2007.5px;top:938.1px;width:4.0px;height:4.0px;background:#16a34a;border-radius:2px"></div>
<div class="t" style="left:2014.8px;top:934.71px;font-size:10.5px;font-weight:700;color:#3c434a;">Published</div>
<div class="t" style="left:403.0px;top:955.94px;font-size:12.0px;font-weight:700;color:#646970;">ID: 140</div>
<div class="r" style="left:403.0px;top:981.1px;width:16.0px;height:4.0px;background:#e3eef7;border-radius:2px"></div>
<svg class="r" style="left:745.0px;top:956.6px" width="9" height="17" viewBox="0 0 9 17"><rect x="3.7" y="7" width="1.3" height="8.8" fill="#5b9bd5"/><circle cx="4.3" cy="4" r="3.9" fill="#d41a22"/><path d="M0.6 3.3A3.9 3.9 0 0 1 4.8 0.1L3.6 3.8z" fill="#e8823a"/></svg>
<div class="t" style="left:761.0px;top:957.83px;font-size:14.5px;font-weight:400;color:#646e7e;">Zombie Park</div>
<div class="t" style="left:934.0px;top:949.05px;font-size:14.0px;font-weight:700;color:#343a40;">October 31, 2024</div>
<div class="t" style="left:934.0px;top:968.72px;font-size:12.5px;font-weight:400;color:#646970;">19:00</div>
<div class="r" style="left:1085.0px;top:954.1px;width:169.0px;height:23.0px;background:#fde2e2;border-radius:12px"></div>
<div class="t" style="left:1085.0px;top:959.94px;width:169px;text-align:center;font-size:12.0px;font-weight:700;color:#a81e1e;">Expired!</div>
<div class="r" style="left:1284.0px;top:928.1px;width:181.0px;height:23.6px;background:#f7f9fb;border-radius:6px"></div>
<div class="t" style="left:1292.4px;top:932.90px;font-size:13.0px;font-weight:400;color:#2c3338;">Single Entry</div>
<div class="t" style="left:1396.5px;top:932.90px;width:60px;text-align:right;font-size:13.0px;font-weight:400;color:#2c3338;">39</div>
<div class="r" style="left:1284.0px;top:956.1px;width:181.0px;height:23.6px;background:#f7f9fb;border-radius:6px"></div>
<div class="t" style="left:1292.4px;top:960.60px;font-size:13.0px;font-weight:400;color:#2c3338;">Couple Entry</div>
<div class="t" style="left:1396.5px;top:960.60px;width:60px;text-align:right;font-size:13.0px;font-weight:400;color:#2c3338;">59</div>
<div class="r" style="left:1284.0px;top:984.1px;width:181.0px;height:19.0px;background:#e2e8f0;border-radius:5px"></div>
<div class="t" style="left:1284.0px;top:988.04px;width:181px;text-align:center;font-size:12.0px;font-weight:400;color:#64748b;">+1 more</div>
<div class="t" style="left:1485.5px;top:943.45px;width:100px;text-align:center;font-size:14.0px;font-weight:700;color:#1d2327;letter-spacing:0.8px">/85</div>
<div class="r" style="left:1506.0px;top:965.1px;width:60.0px;height:6.0px;background:#f1f5f9;border-radius:3px"></div>
<div class="t" style="left:1485.5px;top:977.14px;width:100px;text-align:center;font-size:12.0px;font-weight:400;color:#646970;">Available</div>
<div class="r" style="left:1607.0px;top:949.1px;width:32.0px;height:32.0px;background:#fff;border:1px solid #d5dbe3;border-radius:7px"></div>
<div class="r" style="left:1647.0px;top:949.1px;width:32.0px;height:32.0px;background:#fff;border:1px solid #d5dbe3;border-radius:7px"></div>
<div class="r" style="left:1687.0px;top:949.1px;width:32.0px;height:32.0px;background:#fff;border:1px solid #d5dbe3;border-radius:7px"></div>
<div class="r" style="left:1727.0px;top:949.1px;width:32.0px;height:32.0px;background:#fff;border:1px solid #d5dbe3;border-radius:7px"></div>
<svg class="r" style="left:1614.0px;top:960.1px" width="18" height="11" viewBox="0 0 18 11"><path d="M9 0.75C4.8 0.75 1.8 3.6 0.7 5.5 1.8 7.4 4.8 10.25 9 10.25S16.2 7.4 17.3 5.5C16.2 3.6 13.2 0.75 9 0.75z" fill="none" stroke="#3b82f6" stroke-width="1.5"/><circle cx="9" cy="4.6" r="4.1" fill="#3b82f6"/><circle cx="10.2" cy="3" r="1.05" fill="#fff"/></svg>
<svg class="r" style="left:1655.0px;top:957.1px" width="18" height="17" viewBox="0 0 18 17"><path d="M0 3.2h1.8v10.9h8.1v1.6H0z" fill="#3d3535"/><rect x="3.1" y="1.1" width="8.9" height="11.6" fill="#3d3535"/><line x1="7.9" y1="8.3" x2="15.4" y2="1.3" stroke="#fff" stroke-width="4.4" stroke-linecap="round"/><line x1="7.9" y1="8.3" x2="15.4" y2="1.3" stroke="#3d3535" stroke-width="3.4" stroke-linecap="round"/><line x1="8.1" y1="8.1" x2="14.6" y2="2.1" stroke="#fff" stroke-width="1.8"/></svg>
<svg class="r" style="left:1695.8px;top:957.4px" width="15" height="15" viewBox="0 0 15 15"><path d="M10.35 0.05L14.45 4.15 5.38 13.22 0.2 14.8 1.28 9.12z" fill="#16a34a"/><path d="M5.24 11.38L12.33 4.29 10.21 2.17 3.12 9.26z" fill="#fff"/><path d="M4.18 10.32L11.27 3.23" stroke="#16a34a" stroke-width="0.7"/></svg>
<svg class="r" style="left:1735.5px;top:956.6px" width="14" height="17" viewBox="0 0 14 17"><path d="M4.5 2.6Q4.5 0.5 7 0.5Q9.5 0.5 9.5 2.6" fill="none" stroke="#c81e1e" stroke-width="1.2"/><rect x="0.4" y="2.5" width="13.2" height="1.9" rx="0.6" fill="#c81e1e"/><path d="M1.4 5.6H12.5L11.4 16.5H2.5z" fill="#c81e1e"/></svg>
</body></html>
